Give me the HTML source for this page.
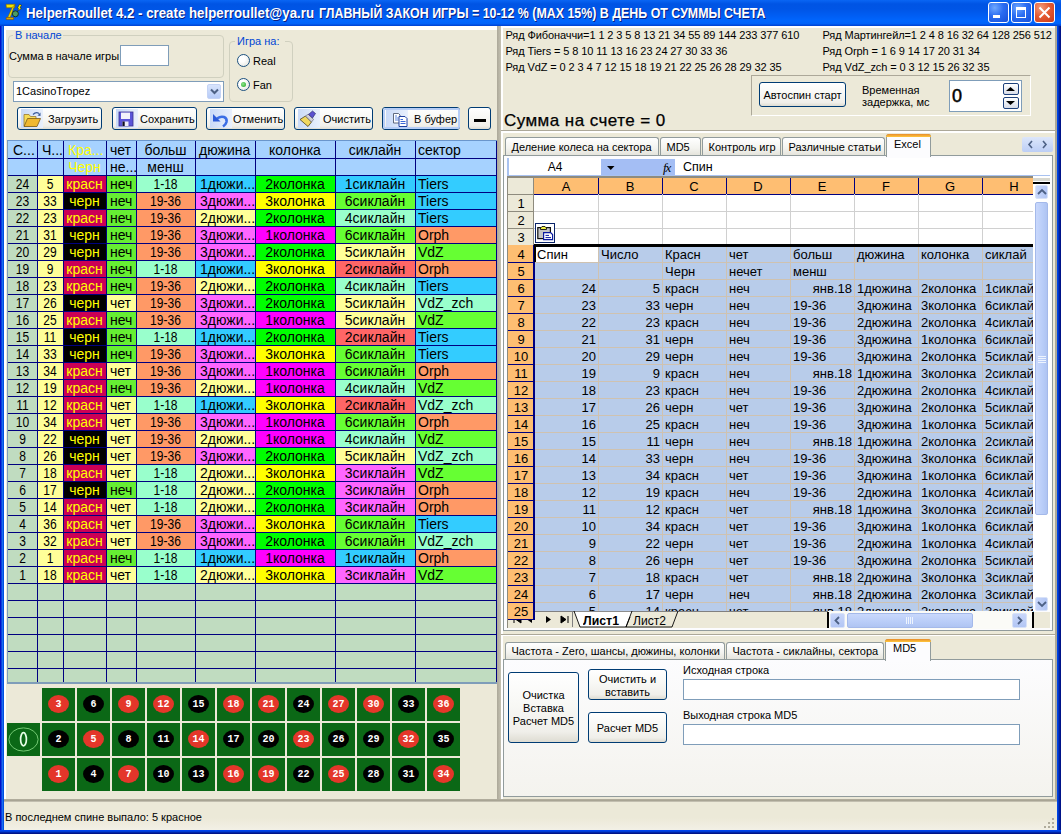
<!DOCTYPE html>
<html><head><meta charset="utf-8"><title>HelperRoullet</title>
<style>
html,body{margin:0;padding:0;}
body{width:1061px;height:834px;position:relative;overflow:hidden;font-family:"Liberation Sans",sans-serif;background:#0054E3;}
body>div{position:absolute;box-sizing:content-box;}
.t{white-space:pre;font-family:"Liberation Sans",sans-serif;}
</style></head><body>
<div style="left:0px;top:0px;width:1061px;height:834px;background:#0054E3;"></div>
<div style="left:1057px;top:0px;width:4px;height:834px;background:linear-gradient(to right,#0048F0 0px,#0040D8 1px,#0028B0 2px,#001890 3px,#000E80 4px);"></div>
<div style="left:0px;top:0px;width:4px;height:834px;background:linear-gradient(to right,#0010C8 0px,#0010C8 1px,#1A70F0 2px,#1A6CF0 2.5px,#0050E0 3.2px,#0050E0 4px);"></div>
<div style="left:0px;top:830px;width:1061px;height:4px;background:linear-gradient(#0040F0 0px,#0046E8 1px,#0030C0 2px,#001890 3px,#001080 4px);"></div>
<div style="left:0px;top:0px;width:1061px;height:26px;background:linear-gradient(#0A66F4 0px,#0054E4 4px,#0055E6 9px,#005EF4 16px,#0066FE 21px,#0062F8 23.5px,#0040D0 26px);"></div>
<svg style="position:absolute;left:0px;top:0px" width="26" height="24" viewBox="0 0 26 24">
<path d="M6 4.3 L15 4.3 L14.6 7.8 L6.4 7.8 Z" fill="#F2E400" stroke="#7A5A00" stroke-width="0.6"/>
<path d="M12.2 7.5 L15 4.5 L10.2 17.6 L7.6 17.6 Z" fill="#EAD800" stroke="#7A5A00" stroke-width="0.5"/>
<path d="M6.2 17.4 L13.6 17.4 L13.6 19.6 L6.2 19.6 Z" fill="#D8A800" stroke="#7A3A00" stroke-width="0.5"/>
<circle cx="15.4" cy="13.8" r="3" fill="#4A9A66" stroke="#0A200A" stroke-width="0.8"/>
<path d="M19.5 4.2 L21.6 5.2 L20 7.6 L21.4 8.4 L17.6 11.2 L18.6 8.6 L17.6 7.8 Z" fill="#F8F000" stroke="#101010" stroke-width="0.5"/>
</svg>
<div class="t" style="left:26px;top:6.15px;font-size:14px;line-height:14px;color:#fff;font-weight:700;transform:scaleX(0.9478);transform-origin:0 0;text-shadow:1px 1px 0 #0A1E80;">HelperRoullet 4.2 - create helperroullet@ya.ru</div>
<div class="t" style="left:318.5px;top:6.15px;font-size:14px;line-height:14px;color:#fff;font-weight:700;transform:scaleX(0.8860);transform-origin:0 0;text-shadow:1px 1px 0 #0A1E80;">ГЛАВНЫЙ ЗАКОН ИГРЫ = 10-12 % (MAX 15%) В ДЕНЬ ОТ СУММЫ СЧЕТА</div>
<div style="left:988px;top:2px;width:19px;height:19px;border:1px solid #fff;border-radius:3px;background:radial-gradient(circle at 30% 25%,#6FA8FF 0%,#2A6CF2 45%,#1750D8 100%);"></div>
<div style="left:1011px;top:2px;width:19px;height:19px;border:1px solid #fff;border-radius:3px;background:radial-gradient(circle at 30% 25%,#6FA8FF 0%,#2A6CF2 45%,#1750D8 100%);"></div>
<div style="left:1034px;top:2px;width:19px;height:19px;border:1px solid #fff;border-radius:3px;background:radial-gradient(circle at 30% 25%,#F29A7A 0%,#E55B33 45%,#C8391A 100%);"></div>
<div style="left:993px;top:15px;width:7px;height:3px;background:#fff;"></div>
<div style="left:1016px;top:7px;width:8px;height:7px;border:1.5px solid #fff;border-top-width:3px;"></div>
<svg style="position:absolute;left:1038px;top:6px" width="13" height="13" viewBox="0 0 13 13"><path d="M1.5 1.5 L11.5 11.5 M11.5 1.5 L1.5 11.5" stroke="#fff" stroke-width="2"/></svg>
<div style="left:4px;top:26px;width:1053px;height:804px;background:#ECE9D8;"></div>
<div style="left:4px;top:26px;width:493px;height:4px;background:#fff;"></div>
<div style="left:4px;top:26px;width:2px;height:774px;background:#fff;"></div>
<div style="left:497px;top:26px;width:4px;height:774px;background:linear-gradient(to right,#ACA899,#C5C2B2);"></div>
<div style="left:8px;top:35px;width:214px;height:41px;border:1px solid #D0D0BF;border-radius:4px;"></div>
<div style="left:13px;top:30px;width:50px;height:10px;background:#ECE9D8;"></div>
<div class="t" style="left:15px;top:30.19px;font-size:11px;line-height:11px;color:#0046D5;font-weight:400;">В начале</div>
<div class="t" style="left:9px;top:50.69px;font-size:11px;line-height:11px;color:#000;font-weight:400;">Сумма в начале игры</div>
<div style="left:120px;top:45px;width:47px;height:19px;border:1px solid #7F9DB9;background:#fff;"></div>
<div style="left:229px;top:41px;width:62px;height:59px;border:1px solid #D0D0BF;border-radius:4px;"></div>
<div style="left:235px;top:36px;width:50px;height:10px;background:#ECE9D8;"></div>
<div class="t" style="left:237px;top:36.19px;font-size:11px;line-height:11px;color:#0046D5;font-weight:400;">Игра на:</div>
<div style="left:237px;top:54px;width:11px;height:11px;border:1px solid #1C5180;border-radius:50%;background:radial-gradient(circle at 35% 35%,#fff 30%,#E0E0D8 100%);"></div>
<div class="t" style="left:253px;top:55.69px;font-size:11px;line-height:11px;color:#000;font-weight:400;">Real</div>
<div style="left:237px;top:78px;width:11px;height:11px;border:1px solid #1C5180;border-radius:50%;background:radial-gradient(circle at 35% 35%,#fff 30%,#E0E0D8 100%);"></div>
<div style="left:241px;top:82px;width:5px;height:5px;border-radius:50%;background:radial-gradient(circle at 40% 40%,#8CE68C,#21A121);"></div>
<div class="t" style="left:253px;top:79.69px;font-size:11px;line-height:11px;color:#000;font-weight:400;">Fan</div>
<div style="left:13px;top:81px;width:209px;height:19px;border:1px solid #7F9DB9;background:#fff;"></div>
<div class="t" style="left:16px;top:85.69px;font-size:11px;line-height:11px;color:#000;font-weight:400;">1CasinoTropez</div>
<div style="left:207px;top:84px;width:14px;height:15px;border-radius:2px;background:linear-gradient(#D8E4FC,#B6CBF8);border:1px solid #C4D3F5;box-sizing:border-box;"></div>
<svg style="position:absolute;left:210px;top:88px" width="9" height="7" viewBox="0 0 9 7"><path d="M1 1.5 L4.5 5 L8 1.5" fill="none" stroke="#4D6185" stroke-width="2"/></svg>
<div style="left:17px;top:107px;width:83px;height:21px;border:1px solid #003C74;border-radius:3px;background:linear-gradient(#FFFFFF 0%,#F8F8F5 45%,#F0EFEA 85%,#DEDCD2 100%);"></div>
<div style="left:21px;top:109px;width:22px;height:19px;background:linear-gradient(to right,#C9DAF8,#E9F0FC);"></div>
<svg style="position:absolute;left:21px;top:109px" width="22" height="19" viewBox="0 0 22 19"><path d="M3 17 L3 5.5 L8 5.5 L9.5 7.5 L15 7.5 L15 17 Z" fill="#F6DC58" stroke="#9A7A30" stroke-width="0.8"/><path d="M6.5 9.5 L19.5 9.5 L16 17.5 L3 17.5 Z" fill="#F0B830" stroke="#7A5A18" stroke-width="0.8"/><path d="M12 5.5 Q15 2.5 18 4.5" fill="none" stroke="#3A5A9A" stroke-width="1.3"/><path d="M16.5 6.5 L19.5 3.5 L19.5 7 Z" fill="#3A5A9A"/></svg>
<div class="t" style="left:48px;top:113.99px;font-size:11px;line-height:11px;color:#000;font-weight:400;">Загрузить</div>
<div style="left:112px;top:107px;width:83px;height:21px;border:1px solid #003C74;border-radius:3px;background:linear-gradient(#FFFFFF 0%,#F8F8F5 45%,#F0EFEA 85%,#DEDCD2 100%);"></div>
<div style="left:116px;top:109px;width:22px;height:19px;background:linear-gradient(to right,#C9DAF8,#E9F0FC);"></div>
<svg style="position:absolute;left:116px;top:109px" width="22" height="19" viewBox="0 0 22 19"><rect x="3" y="3" width="14" height="14" fill="#5B55D8" stroke="#3A3090" stroke-width="0.8"/><rect x="5" y="3.6" width="9" height="6.4" fill="#F4F4FA"/><rect x="6.5" y="12.5" width="6" height="4.5" fill="#EDEDF8"/><rect x="6.5" y="12.5" width="2.2" height="4.5" fill="#101020"/></svg>
<div class="t" style="left:140px;top:113.99px;font-size:11px;line-height:11px;color:#000;font-weight:400;">Сохранить</div>
<div style="left:206px;top:107px;width:77px;height:21px;border:1px solid #003C74;border-radius:3px;background:linear-gradient(#FFFFFF 0%,#F8F8F5 45%,#F0EFEA 85%,#DEDCD2 100%);"></div>
<div style="left:210px;top:109px;width:22px;height:19px;background:linear-gradient(to right,#C9DAF8,#E9F0FC);"></div>
<svg style="position:absolute;left:210px;top:109px" width="22" height="19" viewBox="0 0 22 19"><path d="M7 9.5 C12 6 17.5 8 16.5 13 C16 15 14.5 16.5 13 17.5" fill="none" stroke="#3B6EE5" stroke-width="2.6"/><path d="M3 5 L3 12.5 L10.5 12.5 Z" fill="#2C5BD8"/></svg>
<div class="t" style="left:233px;top:113.99px;font-size:11px;line-height:11px;color:#000;font-weight:400;">Отменить</div>
<div style="left:294px;top:107px;width:77px;height:21px;border:1px solid #003C74;border-radius:3px;background:linear-gradient(#FFFFFF 0%,#F8F8F5 45%,#F0EFEA 85%,#DEDCD2 100%);"></div>
<div style="left:298px;top:109px;width:22px;height:19px;background:linear-gradient(to right,#C9DAF8,#E9F0FC);"></div>
<svg style="position:absolute;left:298px;top:109px" width="22" height="19" viewBox="0 0 22 19"><path d="M2 10.5 L7.5 7 L13.5 13 L10 17.5 Z" fill="#F0D860" stroke="#4A4020" stroke-width="0.8"/><path d="M7.5 7 L10.5 5 L15.5 10.5 L13.5 13 Z" fill="#D0D0D8" stroke="#606070" stroke-width="0.6"/><path d="M10.5 5.5 L14.5 2 L17.5 4.5 L14.5 9 Z" fill="#5A50D0" stroke="#202060" stroke-width="0.6"/></svg>
<div class="t" style="left:323px;top:113.99px;font-size:11px;line-height:11px;color:#000;font-weight:400;">Очистить</div>
<div style="left:382px;top:107px;width:76px;height:21px;border:1px solid #003C74;border-radius:3px;background:linear-gradient(#FFFFFF 0%,#F8F8F5 45%,#F0EFEA 85%,#DEDCD2 100%);"></div>
<div style="left:386px;top:109px;width:22px;height:19px;background:linear-gradient(to right,#C9DAF8,#E9F0FC);"></div>
<svg style="position:absolute;left:386px;top:109px" width="22" height="19" viewBox="0 0 22 19"><path d="M7.5 4.5 H12.5 L14 6 V14 H7.5 Z" fill="#fff" stroke="#505a70" stroke-width="0.9"/><path d="M9 7 H11 M9 9 H12.5 M9 11 H12.5" stroke="#4A78D8" stroke-width="0.9"/><path d="M13 7.5 H19 L21 9.5 V17.5 H13 Z" fill="#fff" stroke="#2040A0" stroke-width="1"/><path d="M14.5 10.5 H17 M14.5 12.5 H19.5 M14.5 14.5 H19.5" stroke="#3A68D8" stroke-width="1"/></svg>
<div class="t" style="left:414px;top:113.99px;font-size:11px;line-height:11px;color:#000;font-weight:400;">В буфер</div>
<div style="left:383px;top:108px;width:73px;height:17px;border:2px solid #B6CDF6;border-radius:2px;"></div>
<div style="left:468px;top:107px;width:21px;height:21px;border:1px solid #003C74;border-radius:3px;background:linear-gradient(#FFFFFF 0%,#F8F8F5 45%,#F0EFEA 85%,#DEDCD2 100%);"></div>
<div style="left:474px;top:119px;width:12px;height:3px;background:#000;"></div>
<div style="left:7px;top:140px;width:490px;height:543px;background:#C0DCC0;"></div>
<div style="left:7px;top:140px;width:1px;height:543px;background:#7F9DB9;"></div>
<div style="left:7px;top:682px;width:490px;height:2px;background:#7F9DB9;"></div>
<div style="left:7px;top:140px;width:490px;height:1px;background:#6A96CC;"></div>
<div style="left:8px;top:141px;width:488px;height:34px;background:#A6D2FF;"></div>
<div style="left:8px;top:176px;width:29px;height:16px;background:#C0DCC0;"></div>
<div style="left:37px;top:176px;width:26px;height:16px;background:#FFFF99;"></div>
<div style="left:63px;top:176px;width:43px;height:16px;background:#CC0055;"></div>
<div style="left:106px;top:176px;width:30px;height:16px;background:#66EE33;"></div>
<div style="left:136px;top:176px;width:59px;height:16px;background:#99FFCC;"></div>
<div style="left:195px;top:176px;width:60px;height:16px;background:#33CCFF;"></div>
<div style="left:255px;top:176px;width:80px;height:16px;background:#00FF00;"></div>
<div style="left:335px;top:176px;width:80px;height:16px;background:#33CCFF;"></div>
<div style="left:415px;top:176px;width:81px;height:16px;background:#33CCFF;"></div>
<div class="t" style="left:8px;top:177.15px;font-size:14px;line-height:14px;color:#000;font-weight:400;width:29px;text-align:center;transform:scaleX(0.86);transform-origin:50% 0;">24</div>
<div class="t" style="left:37px;top:177.15px;font-size:14px;line-height:14px;color:#000;font-weight:400;width:26px;text-align:center;transform:scaleX(0.86);transform-origin:50% 0;">5</div>
<div class="t" style="left:63px;top:177.15px;font-size:14px;line-height:14px;color:#FFFF00;font-weight:400;width:43px;text-align:center;">красн</div>
<div class="t" style="left:110px;top:177.15px;font-size:14px;line-height:14px;color:#000;font-weight:400;">неч</div>
<div class="t" style="left:136px;top:177.15px;font-size:14px;line-height:14px;color:#000;font-weight:400;width:59px;text-align:center;transform:scaleX(0.86);transform-origin:50% 0;">1-18</div>
<div class="t" style="left:200px;top:177.15px;font-size:14px;line-height:14px;color:#000;font-weight:400;">1дюжи...</div>
<div class="t" style="left:255px;top:177.15px;font-size:14px;line-height:14px;color:#000;font-weight:400;width:80px;text-align:center;">2колонка</div>
<div class="t" style="left:335px;top:177.15px;font-size:14px;line-height:14px;color:#000;font-weight:400;width:80px;text-align:center;">1сиклайн</div>
<div class="t" style="left:418px;top:177.15px;font-size:14px;line-height:14px;color:#000;font-weight:400;">Tiers</div>
<div style="left:8px;top:193px;width:29px;height:16px;background:#C0DCC0;"></div>
<div style="left:37px;top:193px;width:26px;height:16px;background:#FFFF99;"></div>
<div style="left:63px;top:193px;width:43px;height:16px;background:#000000;"></div>
<div style="left:106px;top:193px;width:30px;height:16px;background:#66EE33;"></div>
<div style="left:136px;top:193px;width:59px;height:16px;background:#FF9966;"></div>
<div style="left:195px;top:193px;width:60px;height:16px;background:#FF66FF;"></div>
<div style="left:255px;top:193px;width:80px;height:16px;background:#FFFF00;"></div>
<div style="left:335px;top:193px;width:80px;height:16px;background:#66FF33;"></div>
<div style="left:415px;top:193px;width:81px;height:16px;background:#33CCFF;"></div>
<div class="t" style="left:8px;top:194.15px;font-size:14px;line-height:14px;color:#000;font-weight:400;width:29px;text-align:center;transform:scaleX(0.86);transform-origin:50% 0;">23</div>
<div class="t" style="left:37px;top:194.15px;font-size:14px;line-height:14px;color:#000;font-weight:400;width:26px;text-align:center;transform:scaleX(0.86);transform-origin:50% 0;">33</div>
<div class="t" style="left:63px;top:194.15px;font-size:14px;line-height:14px;color:#FFFF00;font-weight:400;width:43px;text-align:center;">черн</div>
<div class="t" style="left:110px;top:194.15px;font-size:14px;line-height:14px;color:#000;font-weight:400;">неч</div>
<div class="t" style="left:136px;top:194.15px;font-size:14px;line-height:14px;color:#000;font-weight:400;width:59px;text-align:center;transform:scaleX(0.86);transform-origin:50% 0;">19-36</div>
<div class="t" style="left:200px;top:194.15px;font-size:14px;line-height:14px;color:#000;font-weight:400;">3дюжи...</div>
<div class="t" style="left:255px;top:194.15px;font-size:14px;line-height:14px;color:#000;font-weight:400;width:80px;text-align:center;">3колонка</div>
<div class="t" style="left:335px;top:194.15px;font-size:14px;line-height:14px;color:#000;font-weight:400;width:80px;text-align:center;">6сиклайн</div>
<div class="t" style="left:418px;top:194.15px;font-size:14px;line-height:14px;color:#000;font-weight:400;">Tiers</div>
<div style="left:8px;top:210px;width:29px;height:16px;background:#C0DCC0;"></div>
<div style="left:37px;top:210px;width:26px;height:16px;background:#FFFF99;"></div>
<div style="left:63px;top:210px;width:43px;height:16px;background:#CC0055;"></div>
<div style="left:106px;top:210px;width:30px;height:16px;background:#66EE33;"></div>
<div style="left:136px;top:210px;width:59px;height:16px;background:#FF9966;"></div>
<div style="left:195px;top:210px;width:60px;height:16px;background:#FFFF99;"></div>
<div style="left:255px;top:210px;width:80px;height:16px;background:#00FF00;"></div>
<div style="left:335px;top:210px;width:80px;height:16px;background:#99FFCC;"></div>
<div style="left:415px;top:210px;width:81px;height:16px;background:#33CCFF;"></div>
<div class="t" style="left:8px;top:211.15px;font-size:14px;line-height:14px;color:#000;font-weight:400;width:29px;text-align:center;transform:scaleX(0.86);transform-origin:50% 0;">22</div>
<div class="t" style="left:37px;top:211.15px;font-size:14px;line-height:14px;color:#000;font-weight:400;width:26px;text-align:center;transform:scaleX(0.86);transform-origin:50% 0;">23</div>
<div class="t" style="left:63px;top:211.15px;font-size:14px;line-height:14px;color:#FFFF00;font-weight:400;width:43px;text-align:center;">красн</div>
<div class="t" style="left:110px;top:211.15px;font-size:14px;line-height:14px;color:#000;font-weight:400;">неч</div>
<div class="t" style="left:136px;top:211.15px;font-size:14px;line-height:14px;color:#000;font-weight:400;width:59px;text-align:center;transform:scaleX(0.86);transform-origin:50% 0;">19-36</div>
<div class="t" style="left:200px;top:211.15px;font-size:14px;line-height:14px;color:#000;font-weight:400;">2дюжи...</div>
<div class="t" style="left:255px;top:211.15px;font-size:14px;line-height:14px;color:#000;font-weight:400;width:80px;text-align:center;">2колонка</div>
<div class="t" style="left:335px;top:211.15px;font-size:14px;line-height:14px;color:#000;font-weight:400;width:80px;text-align:center;">4сиклайн</div>
<div class="t" style="left:418px;top:211.15px;font-size:14px;line-height:14px;color:#000;font-weight:400;">Tiers</div>
<div style="left:8px;top:227px;width:29px;height:16px;background:#C0DCC0;"></div>
<div style="left:37px;top:227px;width:26px;height:16px;background:#FFFF99;"></div>
<div style="left:63px;top:227px;width:43px;height:16px;background:#000000;"></div>
<div style="left:106px;top:227px;width:30px;height:16px;background:#66EE33;"></div>
<div style="left:136px;top:227px;width:59px;height:16px;background:#FF9966;"></div>
<div style="left:195px;top:227px;width:60px;height:16px;background:#FF66FF;"></div>
<div style="left:255px;top:227px;width:80px;height:16px;background:#FF00FF;"></div>
<div style="left:335px;top:227px;width:80px;height:16px;background:#66FF33;"></div>
<div style="left:415px;top:227px;width:81px;height:16px;background:#FF9966;"></div>
<div class="t" style="left:8px;top:228.15px;font-size:14px;line-height:14px;color:#000;font-weight:400;width:29px;text-align:center;transform:scaleX(0.86);transform-origin:50% 0;">21</div>
<div class="t" style="left:37px;top:228.15px;font-size:14px;line-height:14px;color:#000;font-weight:400;width:26px;text-align:center;transform:scaleX(0.86);transform-origin:50% 0;">31</div>
<div class="t" style="left:63px;top:228.15px;font-size:14px;line-height:14px;color:#FFFF00;font-weight:400;width:43px;text-align:center;">черн</div>
<div class="t" style="left:110px;top:228.15px;font-size:14px;line-height:14px;color:#000;font-weight:400;">неч</div>
<div class="t" style="left:136px;top:228.15px;font-size:14px;line-height:14px;color:#000;font-weight:400;width:59px;text-align:center;transform:scaleX(0.86);transform-origin:50% 0;">19-36</div>
<div class="t" style="left:200px;top:228.15px;font-size:14px;line-height:14px;color:#000;font-weight:400;">3дюжи...</div>
<div class="t" style="left:255px;top:228.15px;font-size:14px;line-height:14px;color:#000;font-weight:400;width:80px;text-align:center;">1колонка</div>
<div class="t" style="left:335px;top:228.15px;font-size:14px;line-height:14px;color:#000;font-weight:400;width:80px;text-align:center;">6сиклайн</div>
<div class="t" style="left:418px;top:228.15px;font-size:14px;line-height:14px;color:#000;font-weight:400;">Orph</div>
<div style="left:8px;top:244px;width:29px;height:16px;background:#C0DCC0;"></div>
<div style="left:37px;top:244px;width:26px;height:16px;background:#FFFF99;"></div>
<div style="left:63px;top:244px;width:43px;height:16px;background:#000000;"></div>
<div style="left:106px;top:244px;width:30px;height:16px;background:#66EE33;"></div>
<div style="left:136px;top:244px;width:59px;height:16px;background:#FF9966;"></div>
<div style="left:195px;top:244px;width:60px;height:16px;background:#FF66FF;"></div>
<div style="left:255px;top:244px;width:80px;height:16px;background:#00FF00;"></div>
<div style="left:335px;top:244px;width:80px;height:16px;background:#FFFF99;"></div>
<div style="left:415px;top:244px;width:81px;height:16px;background:#66FF33;"></div>
<div class="t" style="left:8px;top:245.15px;font-size:14px;line-height:14px;color:#000;font-weight:400;width:29px;text-align:center;transform:scaleX(0.86);transform-origin:50% 0;">20</div>
<div class="t" style="left:37px;top:245.15px;font-size:14px;line-height:14px;color:#000;font-weight:400;width:26px;text-align:center;transform:scaleX(0.86);transform-origin:50% 0;">29</div>
<div class="t" style="left:63px;top:245.15px;font-size:14px;line-height:14px;color:#FFFF00;font-weight:400;width:43px;text-align:center;">черн</div>
<div class="t" style="left:110px;top:245.15px;font-size:14px;line-height:14px;color:#000;font-weight:400;">неч</div>
<div class="t" style="left:136px;top:245.15px;font-size:14px;line-height:14px;color:#000;font-weight:400;width:59px;text-align:center;transform:scaleX(0.86);transform-origin:50% 0;">19-36</div>
<div class="t" style="left:200px;top:245.15px;font-size:14px;line-height:14px;color:#000;font-weight:400;">3дюжи...</div>
<div class="t" style="left:255px;top:245.15px;font-size:14px;line-height:14px;color:#000;font-weight:400;width:80px;text-align:center;">2колонка</div>
<div class="t" style="left:335px;top:245.15px;font-size:14px;line-height:14px;color:#000;font-weight:400;width:80px;text-align:center;">5сиклайн</div>
<div class="t" style="left:418px;top:245.15px;font-size:14px;line-height:14px;color:#000;font-weight:400;">VdZ</div>
<div style="left:8px;top:261px;width:29px;height:16px;background:#C0DCC0;"></div>
<div style="left:37px;top:261px;width:26px;height:16px;background:#FFFF99;"></div>
<div style="left:63px;top:261px;width:43px;height:16px;background:#CC0055;"></div>
<div style="left:106px;top:261px;width:30px;height:16px;background:#66EE33;"></div>
<div style="left:136px;top:261px;width:59px;height:16px;background:#99FFCC;"></div>
<div style="left:195px;top:261px;width:60px;height:16px;background:#33CCFF;"></div>
<div style="left:255px;top:261px;width:80px;height:16px;background:#FFFF00;"></div>
<div style="left:335px;top:261px;width:80px;height:16px;background:#FF6666;"></div>
<div style="left:415px;top:261px;width:81px;height:16px;background:#FF9966;"></div>
<div class="t" style="left:8px;top:262.15px;font-size:14px;line-height:14px;color:#000;font-weight:400;width:29px;text-align:center;transform:scaleX(0.86);transform-origin:50% 0;">19</div>
<div class="t" style="left:37px;top:262.15px;font-size:14px;line-height:14px;color:#000;font-weight:400;width:26px;text-align:center;transform:scaleX(0.86);transform-origin:50% 0;">9</div>
<div class="t" style="left:63px;top:262.15px;font-size:14px;line-height:14px;color:#FFFF00;font-weight:400;width:43px;text-align:center;">красн</div>
<div class="t" style="left:110px;top:262.15px;font-size:14px;line-height:14px;color:#000;font-weight:400;">неч</div>
<div class="t" style="left:136px;top:262.15px;font-size:14px;line-height:14px;color:#000;font-weight:400;width:59px;text-align:center;transform:scaleX(0.86);transform-origin:50% 0;">1-18</div>
<div class="t" style="left:200px;top:262.15px;font-size:14px;line-height:14px;color:#000;font-weight:400;">1дюжи...</div>
<div class="t" style="left:255px;top:262.15px;font-size:14px;line-height:14px;color:#000;font-weight:400;width:80px;text-align:center;">3колонка</div>
<div class="t" style="left:335px;top:262.15px;font-size:14px;line-height:14px;color:#000;font-weight:400;width:80px;text-align:center;">2сиклайн</div>
<div class="t" style="left:418px;top:262.15px;font-size:14px;line-height:14px;color:#000;font-weight:400;">Orph</div>
<div style="left:8px;top:278px;width:29px;height:16px;background:#C0DCC0;"></div>
<div style="left:37px;top:278px;width:26px;height:16px;background:#FFFF99;"></div>
<div style="left:63px;top:278px;width:43px;height:16px;background:#CC0055;"></div>
<div style="left:106px;top:278px;width:30px;height:16px;background:#66EE33;"></div>
<div style="left:136px;top:278px;width:59px;height:16px;background:#FF9966;"></div>
<div style="left:195px;top:278px;width:60px;height:16px;background:#FFFF99;"></div>
<div style="left:255px;top:278px;width:80px;height:16px;background:#00FF00;"></div>
<div style="left:335px;top:278px;width:80px;height:16px;background:#99FFCC;"></div>
<div style="left:415px;top:278px;width:81px;height:16px;background:#33CCFF;"></div>
<div class="t" style="left:8px;top:279.15px;font-size:14px;line-height:14px;color:#000;font-weight:400;width:29px;text-align:center;transform:scaleX(0.86);transform-origin:50% 0;">18</div>
<div class="t" style="left:37px;top:279.15px;font-size:14px;line-height:14px;color:#000;font-weight:400;width:26px;text-align:center;transform:scaleX(0.86);transform-origin:50% 0;">23</div>
<div class="t" style="left:63px;top:279.15px;font-size:14px;line-height:14px;color:#FFFF00;font-weight:400;width:43px;text-align:center;">красн</div>
<div class="t" style="left:110px;top:279.15px;font-size:14px;line-height:14px;color:#000;font-weight:400;">неч</div>
<div class="t" style="left:136px;top:279.15px;font-size:14px;line-height:14px;color:#000;font-weight:400;width:59px;text-align:center;transform:scaleX(0.86);transform-origin:50% 0;">19-36</div>
<div class="t" style="left:200px;top:279.15px;font-size:14px;line-height:14px;color:#000;font-weight:400;">2дюжи...</div>
<div class="t" style="left:255px;top:279.15px;font-size:14px;line-height:14px;color:#000;font-weight:400;width:80px;text-align:center;">2колонка</div>
<div class="t" style="left:335px;top:279.15px;font-size:14px;line-height:14px;color:#000;font-weight:400;width:80px;text-align:center;">4сиклайн</div>
<div class="t" style="left:418px;top:279.15px;font-size:14px;line-height:14px;color:#000;font-weight:400;">Tiers</div>
<div style="left:8px;top:295px;width:29px;height:16px;background:#C0DCC0;"></div>
<div style="left:37px;top:295px;width:26px;height:16px;background:#FFFF99;"></div>
<div style="left:63px;top:295px;width:43px;height:16px;background:#000000;"></div>
<div style="left:106px;top:295px;width:30px;height:16px;background:#FFFF99;"></div>
<div style="left:136px;top:295px;width:59px;height:16px;background:#FF9966;"></div>
<div style="left:195px;top:295px;width:60px;height:16px;background:#FF66FF;"></div>
<div style="left:255px;top:295px;width:80px;height:16px;background:#00FF00;"></div>
<div style="left:335px;top:295px;width:80px;height:16px;background:#FFFF99;"></div>
<div style="left:415px;top:295px;width:81px;height:16px;background:#99FFCC;"></div>
<div class="t" style="left:8px;top:296.15px;font-size:14px;line-height:14px;color:#000;font-weight:400;width:29px;text-align:center;transform:scaleX(0.86);transform-origin:50% 0;">17</div>
<div class="t" style="left:37px;top:296.15px;font-size:14px;line-height:14px;color:#000;font-weight:400;width:26px;text-align:center;transform:scaleX(0.86);transform-origin:50% 0;">26</div>
<div class="t" style="left:63px;top:296.15px;font-size:14px;line-height:14px;color:#FFFF00;font-weight:400;width:43px;text-align:center;">черн</div>
<div class="t" style="left:110px;top:296.15px;font-size:14px;line-height:14px;color:#000;font-weight:400;">чет</div>
<div class="t" style="left:136px;top:296.15px;font-size:14px;line-height:14px;color:#000;font-weight:400;width:59px;text-align:center;transform:scaleX(0.86);transform-origin:50% 0;">19-36</div>
<div class="t" style="left:200px;top:296.15px;font-size:14px;line-height:14px;color:#000;font-weight:400;">3дюжи...</div>
<div class="t" style="left:255px;top:296.15px;font-size:14px;line-height:14px;color:#000;font-weight:400;width:80px;text-align:center;">2колонка</div>
<div class="t" style="left:335px;top:296.15px;font-size:14px;line-height:14px;color:#000;font-weight:400;width:80px;text-align:center;">5сиклайн</div>
<div class="t" style="left:418px;top:296.15px;font-size:14px;line-height:14px;color:#000;font-weight:400;">VdZ_zch</div>
<div style="left:8px;top:312px;width:29px;height:16px;background:#C0DCC0;"></div>
<div style="left:37px;top:312px;width:26px;height:16px;background:#FFFF99;"></div>
<div style="left:63px;top:312px;width:43px;height:16px;background:#CC0055;"></div>
<div style="left:106px;top:312px;width:30px;height:16px;background:#66EE33;"></div>
<div style="left:136px;top:312px;width:59px;height:16px;background:#FF9966;"></div>
<div style="left:195px;top:312px;width:60px;height:16px;background:#FF66FF;"></div>
<div style="left:255px;top:312px;width:80px;height:16px;background:#FF00FF;"></div>
<div style="left:335px;top:312px;width:80px;height:16px;background:#FFFF99;"></div>
<div style="left:415px;top:312px;width:81px;height:16px;background:#66FF33;"></div>
<div class="t" style="left:8px;top:313.15px;font-size:14px;line-height:14px;color:#000;font-weight:400;width:29px;text-align:center;transform:scaleX(0.86);transform-origin:50% 0;">16</div>
<div class="t" style="left:37px;top:313.15px;font-size:14px;line-height:14px;color:#000;font-weight:400;width:26px;text-align:center;transform:scaleX(0.86);transform-origin:50% 0;">25</div>
<div class="t" style="left:63px;top:313.15px;font-size:14px;line-height:14px;color:#FFFF00;font-weight:400;width:43px;text-align:center;">красн</div>
<div class="t" style="left:110px;top:313.15px;font-size:14px;line-height:14px;color:#000;font-weight:400;">неч</div>
<div class="t" style="left:136px;top:313.15px;font-size:14px;line-height:14px;color:#000;font-weight:400;width:59px;text-align:center;transform:scaleX(0.86);transform-origin:50% 0;">19-36</div>
<div class="t" style="left:200px;top:313.15px;font-size:14px;line-height:14px;color:#000;font-weight:400;">3дюжи...</div>
<div class="t" style="left:255px;top:313.15px;font-size:14px;line-height:14px;color:#000;font-weight:400;width:80px;text-align:center;">1колонка</div>
<div class="t" style="left:335px;top:313.15px;font-size:14px;line-height:14px;color:#000;font-weight:400;width:80px;text-align:center;">5сиклайн</div>
<div class="t" style="left:418px;top:313.15px;font-size:14px;line-height:14px;color:#000;font-weight:400;">VdZ</div>
<div style="left:8px;top:329px;width:29px;height:16px;background:#C0DCC0;"></div>
<div style="left:37px;top:329px;width:26px;height:16px;background:#FFFF99;"></div>
<div style="left:63px;top:329px;width:43px;height:16px;background:#000000;"></div>
<div style="left:106px;top:329px;width:30px;height:16px;background:#66EE33;"></div>
<div style="left:136px;top:329px;width:59px;height:16px;background:#99FFCC;"></div>
<div style="left:195px;top:329px;width:60px;height:16px;background:#33CCFF;"></div>
<div style="left:255px;top:329px;width:80px;height:16px;background:#00FF00;"></div>
<div style="left:335px;top:329px;width:80px;height:16px;background:#FF6666;"></div>
<div style="left:415px;top:329px;width:81px;height:16px;background:#33CCFF;"></div>
<div class="t" style="left:8px;top:330.15px;font-size:14px;line-height:14px;color:#000;font-weight:400;width:29px;text-align:center;transform:scaleX(0.86);transform-origin:50% 0;">15</div>
<div class="t" style="left:37px;top:330.15px;font-size:14px;line-height:14px;color:#000;font-weight:400;width:26px;text-align:center;transform:scaleX(0.86);transform-origin:50% 0;">11</div>
<div class="t" style="left:63px;top:330.15px;font-size:14px;line-height:14px;color:#FFFF00;font-weight:400;width:43px;text-align:center;">черн</div>
<div class="t" style="left:110px;top:330.15px;font-size:14px;line-height:14px;color:#000;font-weight:400;">неч</div>
<div class="t" style="left:136px;top:330.15px;font-size:14px;line-height:14px;color:#000;font-weight:400;width:59px;text-align:center;transform:scaleX(0.86);transform-origin:50% 0;">1-18</div>
<div class="t" style="left:200px;top:330.15px;font-size:14px;line-height:14px;color:#000;font-weight:400;">1дюжи...</div>
<div class="t" style="left:255px;top:330.15px;font-size:14px;line-height:14px;color:#000;font-weight:400;width:80px;text-align:center;">2колонка</div>
<div class="t" style="left:335px;top:330.15px;font-size:14px;line-height:14px;color:#000;font-weight:400;width:80px;text-align:center;">2сиклайн</div>
<div class="t" style="left:418px;top:330.15px;font-size:14px;line-height:14px;color:#000;font-weight:400;">Tiers</div>
<div style="left:8px;top:346px;width:29px;height:16px;background:#C0DCC0;"></div>
<div style="left:37px;top:346px;width:26px;height:16px;background:#FFFF99;"></div>
<div style="left:63px;top:346px;width:43px;height:16px;background:#000000;"></div>
<div style="left:106px;top:346px;width:30px;height:16px;background:#66EE33;"></div>
<div style="left:136px;top:346px;width:59px;height:16px;background:#FF9966;"></div>
<div style="left:195px;top:346px;width:60px;height:16px;background:#FF66FF;"></div>
<div style="left:255px;top:346px;width:80px;height:16px;background:#FFFF00;"></div>
<div style="left:335px;top:346px;width:80px;height:16px;background:#66FF33;"></div>
<div style="left:415px;top:346px;width:81px;height:16px;background:#33CCFF;"></div>
<div class="t" style="left:8px;top:347.15px;font-size:14px;line-height:14px;color:#000;font-weight:400;width:29px;text-align:center;transform:scaleX(0.86);transform-origin:50% 0;">14</div>
<div class="t" style="left:37px;top:347.15px;font-size:14px;line-height:14px;color:#000;font-weight:400;width:26px;text-align:center;transform:scaleX(0.86);transform-origin:50% 0;">33</div>
<div class="t" style="left:63px;top:347.15px;font-size:14px;line-height:14px;color:#FFFF00;font-weight:400;width:43px;text-align:center;">черн</div>
<div class="t" style="left:110px;top:347.15px;font-size:14px;line-height:14px;color:#000;font-weight:400;">неч</div>
<div class="t" style="left:136px;top:347.15px;font-size:14px;line-height:14px;color:#000;font-weight:400;width:59px;text-align:center;transform:scaleX(0.86);transform-origin:50% 0;">19-36</div>
<div class="t" style="left:200px;top:347.15px;font-size:14px;line-height:14px;color:#000;font-weight:400;">3дюжи...</div>
<div class="t" style="left:255px;top:347.15px;font-size:14px;line-height:14px;color:#000;font-weight:400;width:80px;text-align:center;">3колонка</div>
<div class="t" style="left:335px;top:347.15px;font-size:14px;line-height:14px;color:#000;font-weight:400;width:80px;text-align:center;">6сиклайн</div>
<div class="t" style="left:418px;top:347.15px;font-size:14px;line-height:14px;color:#000;font-weight:400;">Tiers</div>
<div style="left:8px;top:363px;width:29px;height:16px;background:#C0DCC0;"></div>
<div style="left:37px;top:363px;width:26px;height:16px;background:#FFFF99;"></div>
<div style="left:63px;top:363px;width:43px;height:16px;background:#CC0055;"></div>
<div style="left:106px;top:363px;width:30px;height:16px;background:#FFFF99;"></div>
<div style="left:136px;top:363px;width:59px;height:16px;background:#FF9966;"></div>
<div style="left:195px;top:363px;width:60px;height:16px;background:#FF66FF;"></div>
<div style="left:255px;top:363px;width:80px;height:16px;background:#FF00FF;"></div>
<div style="left:335px;top:363px;width:80px;height:16px;background:#66FF33;"></div>
<div style="left:415px;top:363px;width:81px;height:16px;background:#FF9966;"></div>
<div class="t" style="left:8px;top:364.15px;font-size:14px;line-height:14px;color:#000;font-weight:400;width:29px;text-align:center;transform:scaleX(0.86);transform-origin:50% 0;">13</div>
<div class="t" style="left:37px;top:364.15px;font-size:14px;line-height:14px;color:#000;font-weight:400;width:26px;text-align:center;transform:scaleX(0.86);transform-origin:50% 0;">34</div>
<div class="t" style="left:63px;top:364.15px;font-size:14px;line-height:14px;color:#FFFF00;font-weight:400;width:43px;text-align:center;">красн</div>
<div class="t" style="left:110px;top:364.15px;font-size:14px;line-height:14px;color:#000;font-weight:400;">чет</div>
<div class="t" style="left:136px;top:364.15px;font-size:14px;line-height:14px;color:#000;font-weight:400;width:59px;text-align:center;transform:scaleX(0.86);transform-origin:50% 0;">19-36</div>
<div class="t" style="left:200px;top:364.15px;font-size:14px;line-height:14px;color:#000;font-weight:400;">3дюжи...</div>
<div class="t" style="left:255px;top:364.15px;font-size:14px;line-height:14px;color:#000;font-weight:400;width:80px;text-align:center;">1колонка</div>
<div class="t" style="left:335px;top:364.15px;font-size:14px;line-height:14px;color:#000;font-weight:400;width:80px;text-align:center;">6сиклайн</div>
<div class="t" style="left:418px;top:364.15px;font-size:14px;line-height:14px;color:#000;font-weight:400;">Orph</div>
<div style="left:8px;top:380px;width:29px;height:16px;background:#C0DCC0;"></div>
<div style="left:37px;top:380px;width:26px;height:16px;background:#FFFF99;"></div>
<div style="left:63px;top:380px;width:43px;height:16px;background:#CC0055;"></div>
<div style="left:106px;top:380px;width:30px;height:16px;background:#66EE33;"></div>
<div style="left:136px;top:380px;width:59px;height:16px;background:#FF9966;"></div>
<div style="left:195px;top:380px;width:60px;height:16px;background:#FFFF99;"></div>
<div style="left:255px;top:380px;width:80px;height:16px;background:#FF00FF;"></div>
<div style="left:335px;top:380px;width:80px;height:16px;background:#99FFCC;"></div>
<div style="left:415px;top:380px;width:81px;height:16px;background:#66FF33;"></div>
<div class="t" style="left:8px;top:381.15px;font-size:14px;line-height:14px;color:#000;font-weight:400;width:29px;text-align:center;transform:scaleX(0.86);transform-origin:50% 0;">12</div>
<div class="t" style="left:37px;top:381.15px;font-size:14px;line-height:14px;color:#000;font-weight:400;width:26px;text-align:center;transform:scaleX(0.86);transform-origin:50% 0;">19</div>
<div class="t" style="left:63px;top:381.15px;font-size:14px;line-height:14px;color:#FFFF00;font-weight:400;width:43px;text-align:center;">красн</div>
<div class="t" style="left:110px;top:381.15px;font-size:14px;line-height:14px;color:#000;font-weight:400;">неч</div>
<div class="t" style="left:136px;top:381.15px;font-size:14px;line-height:14px;color:#000;font-weight:400;width:59px;text-align:center;transform:scaleX(0.86);transform-origin:50% 0;">19-36</div>
<div class="t" style="left:200px;top:381.15px;font-size:14px;line-height:14px;color:#000;font-weight:400;">2дюжи...</div>
<div class="t" style="left:255px;top:381.15px;font-size:14px;line-height:14px;color:#000;font-weight:400;width:80px;text-align:center;">1колонка</div>
<div class="t" style="left:335px;top:381.15px;font-size:14px;line-height:14px;color:#000;font-weight:400;width:80px;text-align:center;">4сиклайн</div>
<div class="t" style="left:418px;top:381.15px;font-size:14px;line-height:14px;color:#000;font-weight:400;">VdZ</div>
<div style="left:8px;top:397px;width:29px;height:16px;background:#C0DCC0;"></div>
<div style="left:37px;top:397px;width:26px;height:16px;background:#FFFF99;"></div>
<div style="left:63px;top:397px;width:43px;height:16px;background:#CC0055;"></div>
<div style="left:106px;top:397px;width:30px;height:16px;background:#FFFF99;"></div>
<div style="left:136px;top:397px;width:59px;height:16px;background:#99FFCC;"></div>
<div style="left:195px;top:397px;width:60px;height:16px;background:#33CCFF;"></div>
<div style="left:255px;top:397px;width:80px;height:16px;background:#FFFF00;"></div>
<div style="left:335px;top:397px;width:80px;height:16px;background:#FF6666;"></div>
<div style="left:415px;top:397px;width:81px;height:16px;background:#99FFCC;"></div>
<div class="t" style="left:8px;top:398.15px;font-size:14px;line-height:14px;color:#000;font-weight:400;width:29px;text-align:center;transform:scaleX(0.86);transform-origin:50% 0;">11</div>
<div class="t" style="left:37px;top:398.15px;font-size:14px;line-height:14px;color:#000;font-weight:400;width:26px;text-align:center;transform:scaleX(0.86);transform-origin:50% 0;">12</div>
<div class="t" style="left:63px;top:398.15px;font-size:14px;line-height:14px;color:#FFFF00;font-weight:400;width:43px;text-align:center;">красн</div>
<div class="t" style="left:110px;top:398.15px;font-size:14px;line-height:14px;color:#000;font-weight:400;">чет</div>
<div class="t" style="left:136px;top:398.15px;font-size:14px;line-height:14px;color:#000;font-weight:400;width:59px;text-align:center;transform:scaleX(0.86);transform-origin:50% 0;">1-18</div>
<div class="t" style="left:200px;top:398.15px;font-size:14px;line-height:14px;color:#000;font-weight:400;">1дюжи...</div>
<div class="t" style="left:255px;top:398.15px;font-size:14px;line-height:14px;color:#000;font-weight:400;width:80px;text-align:center;">3колонка</div>
<div class="t" style="left:335px;top:398.15px;font-size:14px;line-height:14px;color:#000;font-weight:400;width:80px;text-align:center;">2сиклайн</div>
<div class="t" style="left:418px;top:398.15px;font-size:14px;line-height:14px;color:#000;font-weight:400;">VdZ_zch</div>
<div style="left:8px;top:414px;width:29px;height:16px;background:#C0DCC0;"></div>
<div style="left:37px;top:414px;width:26px;height:16px;background:#FFFF99;"></div>
<div style="left:63px;top:414px;width:43px;height:16px;background:#CC0055;"></div>
<div style="left:106px;top:414px;width:30px;height:16px;background:#FFFF99;"></div>
<div style="left:136px;top:414px;width:59px;height:16px;background:#FF9966;"></div>
<div style="left:195px;top:414px;width:60px;height:16px;background:#FF66FF;"></div>
<div style="left:255px;top:414px;width:80px;height:16px;background:#FF00FF;"></div>
<div style="left:335px;top:414px;width:80px;height:16px;background:#66FF33;"></div>
<div style="left:415px;top:414px;width:81px;height:16px;background:#FF9966;"></div>
<div class="t" style="left:8px;top:415.15px;font-size:14px;line-height:14px;color:#000;font-weight:400;width:29px;text-align:center;transform:scaleX(0.86);transform-origin:50% 0;">10</div>
<div class="t" style="left:37px;top:415.15px;font-size:14px;line-height:14px;color:#000;font-weight:400;width:26px;text-align:center;transform:scaleX(0.86);transform-origin:50% 0;">34</div>
<div class="t" style="left:63px;top:415.15px;font-size:14px;line-height:14px;color:#FFFF00;font-weight:400;width:43px;text-align:center;">красн</div>
<div class="t" style="left:110px;top:415.15px;font-size:14px;line-height:14px;color:#000;font-weight:400;">чет</div>
<div class="t" style="left:136px;top:415.15px;font-size:14px;line-height:14px;color:#000;font-weight:400;width:59px;text-align:center;transform:scaleX(0.86);transform-origin:50% 0;">19-36</div>
<div class="t" style="left:200px;top:415.15px;font-size:14px;line-height:14px;color:#000;font-weight:400;">3дюжи...</div>
<div class="t" style="left:255px;top:415.15px;font-size:14px;line-height:14px;color:#000;font-weight:400;width:80px;text-align:center;">1колонка</div>
<div class="t" style="left:335px;top:415.15px;font-size:14px;line-height:14px;color:#000;font-weight:400;width:80px;text-align:center;">6сиклайн</div>
<div class="t" style="left:418px;top:415.15px;font-size:14px;line-height:14px;color:#000;font-weight:400;">Orph</div>
<div style="left:8px;top:431px;width:29px;height:16px;background:#C0DCC0;"></div>
<div style="left:37px;top:431px;width:26px;height:16px;background:#FFFF99;"></div>
<div style="left:63px;top:431px;width:43px;height:16px;background:#000000;"></div>
<div style="left:106px;top:431px;width:30px;height:16px;background:#FFFF99;"></div>
<div style="left:136px;top:431px;width:59px;height:16px;background:#FF9966;"></div>
<div style="left:195px;top:431px;width:60px;height:16px;background:#FFFF99;"></div>
<div style="left:255px;top:431px;width:80px;height:16px;background:#FF00FF;"></div>
<div style="left:335px;top:431px;width:80px;height:16px;background:#99FFCC;"></div>
<div style="left:415px;top:431px;width:81px;height:16px;background:#66FF33;"></div>
<div class="t" style="left:8px;top:432.15px;font-size:14px;line-height:14px;color:#000;font-weight:400;width:29px;text-align:center;transform:scaleX(0.86);transform-origin:50% 0;">9</div>
<div class="t" style="left:37px;top:432.15px;font-size:14px;line-height:14px;color:#000;font-weight:400;width:26px;text-align:center;transform:scaleX(0.86);transform-origin:50% 0;">22</div>
<div class="t" style="left:63px;top:432.15px;font-size:14px;line-height:14px;color:#FFFF00;font-weight:400;width:43px;text-align:center;">черн</div>
<div class="t" style="left:110px;top:432.15px;font-size:14px;line-height:14px;color:#000;font-weight:400;">чет</div>
<div class="t" style="left:136px;top:432.15px;font-size:14px;line-height:14px;color:#000;font-weight:400;width:59px;text-align:center;transform:scaleX(0.86);transform-origin:50% 0;">19-36</div>
<div class="t" style="left:200px;top:432.15px;font-size:14px;line-height:14px;color:#000;font-weight:400;">2дюжи...</div>
<div class="t" style="left:255px;top:432.15px;font-size:14px;line-height:14px;color:#000;font-weight:400;width:80px;text-align:center;">1колонка</div>
<div class="t" style="left:335px;top:432.15px;font-size:14px;line-height:14px;color:#000;font-weight:400;width:80px;text-align:center;">4сиклайн</div>
<div class="t" style="left:418px;top:432.15px;font-size:14px;line-height:14px;color:#000;font-weight:400;">VdZ</div>
<div style="left:8px;top:448px;width:29px;height:16px;background:#C0DCC0;"></div>
<div style="left:37px;top:448px;width:26px;height:16px;background:#FFFF99;"></div>
<div style="left:63px;top:448px;width:43px;height:16px;background:#000000;"></div>
<div style="left:106px;top:448px;width:30px;height:16px;background:#FFFF99;"></div>
<div style="left:136px;top:448px;width:59px;height:16px;background:#FF9966;"></div>
<div style="left:195px;top:448px;width:60px;height:16px;background:#FF66FF;"></div>
<div style="left:255px;top:448px;width:80px;height:16px;background:#00FF00;"></div>
<div style="left:335px;top:448px;width:80px;height:16px;background:#FFFF99;"></div>
<div style="left:415px;top:448px;width:81px;height:16px;background:#99FFCC;"></div>
<div class="t" style="left:8px;top:449.15px;font-size:14px;line-height:14px;color:#000;font-weight:400;width:29px;text-align:center;transform:scaleX(0.86);transform-origin:50% 0;">8</div>
<div class="t" style="left:37px;top:449.15px;font-size:14px;line-height:14px;color:#000;font-weight:400;width:26px;text-align:center;transform:scaleX(0.86);transform-origin:50% 0;">26</div>
<div class="t" style="left:63px;top:449.15px;font-size:14px;line-height:14px;color:#FFFF00;font-weight:400;width:43px;text-align:center;">черн</div>
<div class="t" style="left:110px;top:449.15px;font-size:14px;line-height:14px;color:#000;font-weight:400;">чет</div>
<div class="t" style="left:136px;top:449.15px;font-size:14px;line-height:14px;color:#000;font-weight:400;width:59px;text-align:center;transform:scaleX(0.86);transform-origin:50% 0;">19-36</div>
<div class="t" style="left:200px;top:449.15px;font-size:14px;line-height:14px;color:#000;font-weight:400;">3дюжи...</div>
<div class="t" style="left:255px;top:449.15px;font-size:14px;line-height:14px;color:#000;font-weight:400;width:80px;text-align:center;">2колонка</div>
<div class="t" style="left:335px;top:449.15px;font-size:14px;line-height:14px;color:#000;font-weight:400;width:80px;text-align:center;">5сиклайн</div>
<div class="t" style="left:418px;top:449.15px;font-size:14px;line-height:14px;color:#000;font-weight:400;">VdZ_zch</div>
<div style="left:8px;top:465px;width:29px;height:16px;background:#C0DCC0;"></div>
<div style="left:37px;top:465px;width:26px;height:16px;background:#FFFF99;"></div>
<div style="left:63px;top:465px;width:43px;height:16px;background:#CC0055;"></div>
<div style="left:106px;top:465px;width:30px;height:16px;background:#FFFF99;"></div>
<div style="left:136px;top:465px;width:59px;height:16px;background:#99FFCC;"></div>
<div style="left:195px;top:465px;width:60px;height:16px;background:#FFFF99;"></div>
<div style="left:255px;top:465px;width:80px;height:16px;background:#FFFF00;"></div>
<div style="left:335px;top:465px;width:80px;height:16px;background:#FF66FF;"></div>
<div style="left:415px;top:465px;width:81px;height:16px;background:#66FF33;"></div>
<div class="t" style="left:8px;top:466.15px;font-size:14px;line-height:14px;color:#000;font-weight:400;width:29px;text-align:center;transform:scaleX(0.86);transform-origin:50% 0;">7</div>
<div class="t" style="left:37px;top:466.15px;font-size:14px;line-height:14px;color:#000;font-weight:400;width:26px;text-align:center;transform:scaleX(0.86);transform-origin:50% 0;">18</div>
<div class="t" style="left:63px;top:466.15px;font-size:14px;line-height:14px;color:#FFFF00;font-weight:400;width:43px;text-align:center;">красн</div>
<div class="t" style="left:110px;top:466.15px;font-size:14px;line-height:14px;color:#000;font-weight:400;">чет</div>
<div class="t" style="left:136px;top:466.15px;font-size:14px;line-height:14px;color:#000;font-weight:400;width:59px;text-align:center;transform:scaleX(0.86);transform-origin:50% 0;">1-18</div>
<div class="t" style="left:200px;top:466.15px;font-size:14px;line-height:14px;color:#000;font-weight:400;">2дюжи...</div>
<div class="t" style="left:255px;top:466.15px;font-size:14px;line-height:14px;color:#000;font-weight:400;width:80px;text-align:center;">3колонка</div>
<div class="t" style="left:335px;top:466.15px;font-size:14px;line-height:14px;color:#000;font-weight:400;width:80px;text-align:center;">3сиклайн</div>
<div class="t" style="left:418px;top:466.15px;font-size:14px;line-height:14px;color:#000;font-weight:400;">VdZ</div>
<div style="left:8px;top:482px;width:29px;height:16px;background:#C0DCC0;"></div>
<div style="left:37px;top:482px;width:26px;height:16px;background:#FFFF99;"></div>
<div style="left:63px;top:482px;width:43px;height:16px;background:#000000;"></div>
<div style="left:106px;top:482px;width:30px;height:16px;background:#66EE33;"></div>
<div style="left:136px;top:482px;width:59px;height:16px;background:#99FFCC;"></div>
<div style="left:195px;top:482px;width:60px;height:16px;background:#FFFF99;"></div>
<div style="left:255px;top:482px;width:80px;height:16px;background:#00FF00;"></div>
<div style="left:335px;top:482px;width:80px;height:16px;background:#FF66FF;"></div>
<div style="left:415px;top:482px;width:81px;height:16px;background:#FF9966;"></div>
<div class="t" style="left:8px;top:483.15px;font-size:14px;line-height:14px;color:#000;font-weight:400;width:29px;text-align:center;transform:scaleX(0.86);transform-origin:50% 0;">6</div>
<div class="t" style="left:37px;top:483.15px;font-size:14px;line-height:14px;color:#000;font-weight:400;width:26px;text-align:center;transform:scaleX(0.86);transform-origin:50% 0;">17</div>
<div class="t" style="left:63px;top:483.15px;font-size:14px;line-height:14px;color:#FFFF00;font-weight:400;width:43px;text-align:center;">черн</div>
<div class="t" style="left:110px;top:483.15px;font-size:14px;line-height:14px;color:#000;font-weight:400;">неч</div>
<div class="t" style="left:136px;top:483.15px;font-size:14px;line-height:14px;color:#000;font-weight:400;width:59px;text-align:center;transform:scaleX(0.86);transform-origin:50% 0;">1-18</div>
<div class="t" style="left:200px;top:483.15px;font-size:14px;line-height:14px;color:#000;font-weight:400;">2дюжи...</div>
<div class="t" style="left:255px;top:483.15px;font-size:14px;line-height:14px;color:#000;font-weight:400;width:80px;text-align:center;">2колонка</div>
<div class="t" style="left:335px;top:483.15px;font-size:14px;line-height:14px;color:#000;font-weight:400;width:80px;text-align:center;">3сиклайн</div>
<div class="t" style="left:418px;top:483.15px;font-size:14px;line-height:14px;color:#000;font-weight:400;">Orph</div>
<div style="left:8px;top:499px;width:29px;height:16px;background:#C0DCC0;"></div>
<div style="left:37px;top:499px;width:26px;height:16px;background:#FFFF99;"></div>
<div style="left:63px;top:499px;width:43px;height:16px;background:#CC0055;"></div>
<div style="left:106px;top:499px;width:30px;height:16px;background:#FFFF99;"></div>
<div style="left:136px;top:499px;width:59px;height:16px;background:#99FFCC;"></div>
<div style="left:195px;top:499px;width:60px;height:16px;background:#FFFF99;"></div>
<div style="left:255px;top:499px;width:80px;height:16px;background:#00FF00;"></div>
<div style="left:335px;top:499px;width:80px;height:16px;background:#FF66FF;"></div>
<div style="left:415px;top:499px;width:81px;height:16px;background:#FF9966;"></div>
<div class="t" style="left:8px;top:500.15px;font-size:14px;line-height:14px;color:#000;font-weight:400;width:29px;text-align:center;transform:scaleX(0.86);transform-origin:50% 0;">5</div>
<div class="t" style="left:37px;top:500.15px;font-size:14px;line-height:14px;color:#000;font-weight:400;width:26px;text-align:center;transform:scaleX(0.86);transform-origin:50% 0;">14</div>
<div class="t" style="left:63px;top:500.15px;font-size:14px;line-height:14px;color:#FFFF00;font-weight:400;width:43px;text-align:center;">красн</div>
<div class="t" style="left:110px;top:500.15px;font-size:14px;line-height:14px;color:#000;font-weight:400;">чет</div>
<div class="t" style="left:136px;top:500.15px;font-size:14px;line-height:14px;color:#000;font-weight:400;width:59px;text-align:center;transform:scaleX(0.86);transform-origin:50% 0;">1-18</div>
<div class="t" style="left:200px;top:500.15px;font-size:14px;line-height:14px;color:#000;font-weight:400;">2дюжи...</div>
<div class="t" style="left:255px;top:500.15px;font-size:14px;line-height:14px;color:#000;font-weight:400;width:80px;text-align:center;">2колонка</div>
<div class="t" style="left:335px;top:500.15px;font-size:14px;line-height:14px;color:#000;font-weight:400;width:80px;text-align:center;">3сиклайн</div>
<div class="t" style="left:418px;top:500.15px;font-size:14px;line-height:14px;color:#000;font-weight:400;">Orph</div>
<div style="left:8px;top:516px;width:29px;height:16px;background:#C0DCC0;"></div>
<div style="left:37px;top:516px;width:26px;height:16px;background:#FFFF99;"></div>
<div style="left:63px;top:516px;width:43px;height:16px;background:#CC0055;"></div>
<div style="left:106px;top:516px;width:30px;height:16px;background:#FFFF99;"></div>
<div style="left:136px;top:516px;width:59px;height:16px;background:#FF9966;"></div>
<div style="left:195px;top:516px;width:60px;height:16px;background:#FF66FF;"></div>
<div style="left:255px;top:516px;width:80px;height:16px;background:#FFFF00;"></div>
<div style="left:335px;top:516px;width:80px;height:16px;background:#66FF33;"></div>
<div style="left:415px;top:516px;width:81px;height:16px;background:#33CCFF;"></div>
<div class="t" style="left:8px;top:517.15px;font-size:14px;line-height:14px;color:#000;font-weight:400;width:29px;text-align:center;transform:scaleX(0.86);transform-origin:50% 0;">4</div>
<div class="t" style="left:37px;top:517.15px;font-size:14px;line-height:14px;color:#000;font-weight:400;width:26px;text-align:center;transform:scaleX(0.86);transform-origin:50% 0;">36</div>
<div class="t" style="left:63px;top:517.15px;font-size:14px;line-height:14px;color:#FFFF00;font-weight:400;width:43px;text-align:center;">красн</div>
<div class="t" style="left:110px;top:517.15px;font-size:14px;line-height:14px;color:#000;font-weight:400;">чет</div>
<div class="t" style="left:136px;top:517.15px;font-size:14px;line-height:14px;color:#000;font-weight:400;width:59px;text-align:center;transform:scaleX(0.86);transform-origin:50% 0;">19-36</div>
<div class="t" style="left:200px;top:517.15px;font-size:14px;line-height:14px;color:#000;font-weight:400;">3дюжи...</div>
<div class="t" style="left:255px;top:517.15px;font-size:14px;line-height:14px;color:#000;font-weight:400;width:80px;text-align:center;">3колонка</div>
<div class="t" style="left:335px;top:517.15px;font-size:14px;line-height:14px;color:#000;font-weight:400;width:80px;text-align:center;">6сиклайн</div>
<div class="t" style="left:418px;top:517.15px;font-size:14px;line-height:14px;color:#000;font-weight:400;">Tiers</div>
<div style="left:8px;top:533px;width:29px;height:16px;background:#C0DCC0;"></div>
<div style="left:37px;top:533px;width:26px;height:16px;background:#FFFF99;"></div>
<div style="left:63px;top:533px;width:43px;height:16px;background:#CC0055;"></div>
<div style="left:106px;top:533px;width:30px;height:16px;background:#FFFF99;"></div>
<div style="left:136px;top:533px;width:59px;height:16px;background:#FF9966;"></div>
<div style="left:195px;top:533px;width:60px;height:16px;background:#FF66FF;"></div>
<div style="left:255px;top:533px;width:80px;height:16px;background:#00FF00;"></div>
<div style="left:335px;top:533px;width:80px;height:16px;background:#66FF33;"></div>
<div style="left:415px;top:533px;width:81px;height:16px;background:#99FFCC;"></div>
<div class="t" style="left:8px;top:534.15px;font-size:14px;line-height:14px;color:#000;font-weight:400;width:29px;text-align:center;transform:scaleX(0.86);transform-origin:50% 0;">3</div>
<div class="t" style="left:37px;top:534.15px;font-size:14px;line-height:14px;color:#000;font-weight:400;width:26px;text-align:center;transform:scaleX(0.86);transform-origin:50% 0;">32</div>
<div class="t" style="left:63px;top:534.15px;font-size:14px;line-height:14px;color:#FFFF00;font-weight:400;width:43px;text-align:center;">красн</div>
<div class="t" style="left:110px;top:534.15px;font-size:14px;line-height:14px;color:#000;font-weight:400;">чет</div>
<div class="t" style="left:136px;top:534.15px;font-size:14px;line-height:14px;color:#000;font-weight:400;width:59px;text-align:center;transform:scaleX(0.86);transform-origin:50% 0;">19-36</div>
<div class="t" style="left:200px;top:534.15px;font-size:14px;line-height:14px;color:#000;font-weight:400;">3дюжи...</div>
<div class="t" style="left:255px;top:534.15px;font-size:14px;line-height:14px;color:#000;font-weight:400;width:80px;text-align:center;">2колонка</div>
<div class="t" style="left:335px;top:534.15px;font-size:14px;line-height:14px;color:#000;font-weight:400;width:80px;text-align:center;">6сиклайн</div>
<div class="t" style="left:418px;top:534.15px;font-size:14px;line-height:14px;color:#000;font-weight:400;">VdZ_zch</div>
<div style="left:8px;top:550px;width:29px;height:16px;background:#C0DCC0;"></div>
<div style="left:37px;top:550px;width:26px;height:16px;background:#FFFF99;"></div>
<div style="left:63px;top:550px;width:43px;height:16px;background:#CC0055;"></div>
<div style="left:106px;top:550px;width:30px;height:16px;background:#66EE33;"></div>
<div style="left:136px;top:550px;width:59px;height:16px;background:#99FFCC;"></div>
<div style="left:195px;top:550px;width:60px;height:16px;background:#33CCFF;"></div>
<div style="left:255px;top:550px;width:80px;height:16px;background:#FF00FF;"></div>
<div style="left:335px;top:550px;width:80px;height:16px;background:#33CCFF;"></div>
<div style="left:415px;top:550px;width:81px;height:16px;background:#FF9966;"></div>
<div class="t" style="left:8px;top:551.15px;font-size:14px;line-height:14px;color:#000;font-weight:400;width:29px;text-align:center;transform:scaleX(0.86);transform-origin:50% 0;">2</div>
<div class="t" style="left:37px;top:551.15px;font-size:14px;line-height:14px;color:#000;font-weight:400;width:26px;text-align:center;transform:scaleX(0.86);transform-origin:50% 0;">1</div>
<div class="t" style="left:63px;top:551.15px;font-size:14px;line-height:14px;color:#FFFF00;font-weight:400;width:43px;text-align:center;">красн</div>
<div class="t" style="left:110px;top:551.15px;font-size:14px;line-height:14px;color:#000;font-weight:400;">неч</div>
<div class="t" style="left:136px;top:551.15px;font-size:14px;line-height:14px;color:#000;font-weight:400;width:59px;text-align:center;transform:scaleX(0.86);transform-origin:50% 0;">1-18</div>
<div class="t" style="left:200px;top:551.15px;font-size:14px;line-height:14px;color:#000;font-weight:400;">1дюжи...</div>
<div class="t" style="left:255px;top:551.15px;font-size:14px;line-height:14px;color:#000;font-weight:400;width:80px;text-align:center;">1колонка</div>
<div class="t" style="left:335px;top:551.15px;font-size:14px;line-height:14px;color:#000;font-weight:400;width:80px;text-align:center;">1сиклайн</div>
<div class="t" style="left:418px;top:551.15px;font-size:14px;line-height:14px;color:#000;font-weight:400;">Orph</div>
<div style="left:8px;top:567px;width:29px;height:16px;background:#C0DCC0;"></div>
<div style="left:37px;top:567px;width:26px;height:16px;background:#FFFF99;"></div>
<div style="left:63px;top:567px;width:43px;height:16px;background:#CC0055;"></div>
<div style="left:106px;top:567px;width:30px;height:16px;background:#FFFF99;"></div>
<div style="left:136px;top:567px;width:59px;height:16px;background:#99FFCC;"></div>
<div style="left:195px;top:567px;width:60px;height:16px;background:#FFFF99;"></div>
<div style="left:255px;top:567px;width:80px;height:16px;background:#FFFF00;"></div>
<div style="left:335px;top:567px;width:80px;height:16px;background:#FF66FF;"></div>
<div style="left:415px;top:567px;width:81px;height:16px;background:#66FF33;"></div>
<div class="t" style="left:8px;top:568.15px;font-size:14px;line-height:14px;color:#000;font-weight:400;width:29px;text-align:center;transform:scaleX(0.86);transform-origin:50% 0;">1</div>
<div class="t" style="left:37px;top:568.15px;font-size:14px;line-height:14px;color:#000;font-weight:400;width:26px;text-align:center;transform:scaleX(0.86);transform-origin:50% 0;">18</div>
<div class="t" style="left:63px;top:568.15px;font-size:14px;line-height:14px;color:#FFFF00;font-weight:400;width:43px;text-align:center;">красн</div>
<div class="t" style="left:110px;top:568.15px;font-size:14px;line-height:14px;color:#000;font-weight:400;">чет</div>
<div class="t" style="left:136px;top:568.15px;font-size:14px;line-height:14px;color:#000;font-weight:400;width:59px;text-align:center;transform:scaleX(0.86);transform-origin:50% 0;">1-18</div>
<div class="t" style="left:200px;top:568.15px;font-size:14px;line-height:14px;color:#000;font-weight:400;">2дюжи...</div>
<div class="t" style="left:255px;top:568.15px;font-size:14px;line-height:14px;color:#000;font-weight:400;width:80px;text-align:center;">3колонка</div>
<div class="t" style="left:335px;top:568.15px;font-size:14px;line-height:14px;color:#000;font-weight:400;width:80px;text-align:center;">3сиклайн</div>
<div class="t" style="left:418px;top:568.15px;font-size:14px;line-height:14px;color:#000;font-weight:400;">VdZ</div>
<div style="left:37px;top:141px;width:1px;height:541px;background:#000080;"></div>
<div style="left:63px;top:141px;width:1px;height:541px;background:#000080;"></div>
<div style="left:106px;top:141px;width:1px;height:541px;background:#000080;"></div>
<div style="left:136px;top:141px;width:1px;height:541px;background:#000080;"></div>
<div style="left:195px;top:141px;width:1px;height:541px;background:#000080;"></div>
<div style="left:255px;top:141px;width:1px;height:541px;background:#000080;"></div>
<div style="left:335px;top:141px;width:1px;height:541px;background:#000080;"></div>
<div style="left:415px;top:141px;width:1px;height:541px;background:#000080;"></div>
<div style="left:496px;top:141px;width:1px;height:541px;background:#000080;"></div>
<div style="left:8px;top:158px;width:488px;height:1px;background:#000080;"></div>
<div style="left:8px;top:175px;width:488px;height:1px;background:#000080;"></div>
<div style="left:8px;top:192px;width:488px;height:1px;background:#000080;"></div>
<div style="left:8px;top:209px;width:488px;height:1px;background:#000080;"></div>
<div style="left:8px;top:226px;width:488px;height:1px;background:#000080;"></div>
<div style="left:8px;top:243px;width:488px;height:1px;background:#000080;"></div>
<div style="left:8px;top:260px;width:488px;height:1px;background:#000080;"></div>
<div style="left:8px;top:277px;width:488px;height:1px;background:#000080;"></div>
<div style="left:8px;top:294px;width:488px;height:1px;background:#000080;"></div>
<div style="left:8px;top:311px;width:488px;height:1px;background:#000080;"></div>
<div style="left:8px;top:328px;width:488px;height:1px;background:#000080;"></div>
<div style="left:8px;top:345px;width:488px;height:1px;background:#000080;"></div>
<div style="left:8px;top:362px;width:488px;height:1px;background:#000080;"></div>
<div style="left:8px;top:379px;width:488px;height:1px;background:#000080;"></div>
<div style="left:8px;top:396px;width:488px;height:1px;background:#000080;"></div>
<div style="left:8px;top:413px;width:488px;height:1px;background:#000080;"></div>
<div style="left:8px;top:430px;width:488px;height:1px;background:#000080;"></div>
<div style="left:8px;top:447px;width:488px;height:1px;background:#000080;"></div>
<div style="left:8px;top:464px;width:488px;height:1px;background:#000080;"></div>
<div style="left:8px;top:481px;width:488px;height:1px;background:#000080;"></div>
<div style="left:8px;top:498px;width:488px;height:1px;background:#000080;"></div>
<div style="left:8px;top:515px;width:488px;height:1px;background:#000080;"></div>
<div style="left:8px;top:532px;width:488px;height:1px;background:#000080;"></div>
<div style="left:8px;top:549px;width:488px;height:1px;background:#000080;"></div>
<div style="left:8px;top:566px;width:488px;height:1px;background:#000080;"></div>
<div style="left:8px;top:583px;width:488px;height:1px;background:#000080;"></div>
<div style="left:8px;top:600px;width:488px;height:1px;background:#000080;"></div>
<div style="left:8px;top:617px;width:488px;height:1px;background:#000080;"></div>
<div style="left:8px;top:634px;width:488px;height:1px;background:#000080;"></div>
<div style="left:8px;top:651px;width:488px;height:1px;background:#000080;"></div>
<div style="left:8px;top:668px;width:488px;height:1px;background:#000080;"></div>
<div class="t" style="left:13px;top:143.15px;font-size:14px;line-height:14px;color:#000;font-weight:400;">С...</div>
<div class="t" style="left:42px;top:143.15px;font-size:14px;line-height:14px;color:#000;font-weight:400;">Ч...</div>
<div class="t" style="left:68px;top:143.15px;font-size:14px;line-height:14px;color:#FFFF00;font-weight:400;">Кра...</div>
<div class="t" style="left:110px;top:143.15px;font-size:14px;line-height:14px;color:#000;font-weight:400;">чет</div>
<div class="t" style="left:136px;top:143.15px;font-size:14px;line-height:14px;color:#000;font-weight:400;width:59px;text-align:center;">больш</div>
<div class="t" style="left:199px;top:143.15px;font-size:14px;line-height:14px;color:#000;font-weight:400;">дюжина</div>
<div class="t" style="left:255px;top:143.15px;font-size:14px;line-height:14px;color:#000;font-weight:400;width:80px;text-align:center;">колонка</div>
<div class="t" style="left:335px;top:143.15px;font-size:14px;line-height:14px;color:#000;font-weight:400;width:80px;text-align:center;">сиклайн</div>
<div class="t" style="left:418px;top:143.15px;font-size:14px;line-height:14px;color:#000;font-weight:400;">сектор</div>
<div class="t" style="left:63px;top:160.15px;font-size:14px;line-height:14px;color:#FFFF00;font-weight:400;width:43px;text-align:center;">Черн</div>
<div class="t" style="left:110px;top:160.15px;font-size:14px;line-height:14px;color:#000;font-weight:400;">не...</div>
<div class="t" style="left:136px;top:160.15px;font-size:14px;line-height:14px;color:#000;font-weight:400;width:59px;text-align:center;">менш</div>
<div style="left:7px;top:723px;width:33px;height:33px;background:#0B6816;"></div>
<svg style="position:absolute;left:7px;top:723px" width="33" height="33" viewBox="0 0 33 33"><ellipse cx="16.5" cy="16.5" rx="14.6" ry="11.6" fill="none" stroke="#72C872" stroke-width="1"/><ellipse cx="16.5" cy="16.3" rx="2.9" ry="6.6" fill="none" stroke="#E8FFE8" stroke-width="1.7"/></svg>
<div style="left:42px;top:688px;width:33px;height:33px;background:#0B6816;"></div>
<div style="left:48px;top:695px;width:21px;height:18px;border-radius:50%;background:#E4362A;"></div>
<div class="t" style="left:42px;top:700.03px;font-size:10px;line-height:10px;color:#fff;font-weight:700;width:33px;text-align:center;font-family:'Liberation Mono',monospace;">3</div>
<div style="left:42px;top:723px;width:33px;height:33px;background:#0B6816;"></div>
<div style="left:48px;top:730px;width:21px;height:18px;border-radius:50%;background:#000;"></div>
<div class="t" style="left:42px;top:735.03px;font-size:10px;line-height:10px;color:#fff;font-weight:700;width:33px;text-align:center;font-family:'Liberation Mono',monospace;">2</div>
<div style="left:42px;top:758px;width:33px;height:33px;background:#0B6816;"></div>
<div style="left:48px;top:765px;width:21px;height:18px;border-radius:50%;background:#E4362A;"></div>
<div class="t" style="left:42px;top:770.03px;font-size:10px;line-height:10px;color:#fff;font-weight:700;width:33px;text-align:center;font-family:'Liberation Mono',monospace;">1</div>
<div style="left:77px;top:688px;width:33px;height:33px;background:#0B6816;"></div>
<div style="left:83px;top:695px;width:21px;height:18px;border-radius:50%;background:#000;"></div>
<div class="t" style="left:77px;top:700.03px;font-size:10px;line-height:10px;color:#fff;font-weight:700;width:33px;text-align:center;font-family:'Liberation Mono',monospace;">6</div>
<div style="left:77px;top:723px;width:33px;height:33px;background:#0B6816;"></div>
<div style="left:83px;top:730px;width:21px;height:18px;border-radius:50%;background:#E4362A;"></div>
<div class="t" style="left:77px;top:735.03px;font-size:10px;line-height:10px;color:#fff;font-weight:700;width:33px;text-align:center;font-family:'Liberation Mono',monospace;">5</div>
<div style="left:77px;top:758px;width:33px;height:33px;background:#0B6816;"></div>
<div style="left:83px;top:765px;width:21px;height:18px;border-radius:50%;background:#000;"></div>
<div class="t" style="left:77px;top:770.03px;font-size:10px;line-height:10px;color:#fff;font-weight:700;width:33px;text-align:center;font-family:'Liberation Mono',monospace;">4</div>
<div style="left:112px;top:688px;width:33px;height:33px;background:#0B6816;"></div>
<div style="left:118px;top:695px;width:21px;height:18px;border-radius:50%;background:#E4362A;"></div>
<div class="t" style="left:112px;top:700.03px;font-size:10px;line-height:10px;color:#fff;font-weight:700;width:33px;text-align:center;font-family:'Liberation Mono',monospace;">9</div>
<div style="left:112px;top:723px;width:33px;height:33px;background:#0B6816;"></div>
<div style="left:118px;top:730px;width:21px;height:18px;border-radius:50%;background:#000;"></div>
<div class="t" style="left:112px;top:735.03px;font-size:10px;line-height:10px;color:#fff;font-weight:700;width:33px;text-align:center;font-family:'Liberation Mono',monospace;">8</div>
<div style="left:112px;top:758px;width:33px;height:33px;background:#0B6816;"></div>
<div style="left:118px;top:765px;width:21px;height:18px;border-radius:50%;background:#E4362A;"></div>
<div class="t" style="left:112px;top:770.03px;font-size:10px;line-height:10px;color:#fff;font-weight:700;width:33px;text-align:center;font-family:'Liberation Mono',monospace;">7</div>
<div style="left:147px;top:688px;width:33px;height:33px;background:#0B6816;"></div>
<div style="left:153px;top:695px;width:21px;height:18px;border-radius:50%;background:#E4362A;"></div>
<div class="t" style="left:147px;top:700.03px;font-size:10px;line-height:10px;color:#fff;font-weight:700;width:33px;text-align:center;font-family:'Liberation Mono',monospace;">12</div>
<div style="left:147px;top:723px;width:33px;height:33px;background:#0B6816;"></div>
<div style="left:153px;top:730px;width:21px;height:18px;border-radius:50%;background:#000;"></div>
<div class="t" style="left:147px;top:735.03px;font-size:10px;line-height:10px;color:#fff;font-weight:700;width:33px;text-align:center;font-family:'Liberation Mono',monospace;">11</div>
<div style="left:147px;top:758px;width:33px;height:33px;background:#0B6816;"></div>
<div style="left:153px;top:765px;width:21px;height:18px;border-radius:50%;background:#000;"></div>
<div class="t" style="left:147px;top:770.03px;font-size:10px;line-height:10px;color:#fff;font-weight:700;width:33px;text-align:center;font-family:'Liberation Mono',monospace;">10</div>
<div style="left:182px;top:688px;width:33px;height:33px;background:#0B6816;"></div>
<div style="left:188px;top:695px;width:21px;height:18px;border-radius:50%;background:#000;"></div>
<div class="t" style="left:182px;top:700.03px;font-size:10px;line-height:10px;color:#fff;font-weight:700;width:33px;text-align:center;font-family:'Liberation Mono',monospace;">15</div>
<div style="left:182px;top:723px;width:33px;height:33px;background:#0B6816;"></div>
<div style="left:188px;top:730px;width:21px;height:18px;border-radius:50%;background:#E4362A;"></div>
<div class="t" style="left:182px;top:735.03px;font-size:10px;line-height:10px;color:#fff;font-weight:700;width:33px;text-align:center;font-family:'Liberation Mono',monospace;">14</div>
<div style="left:182px;top:758px;width:33px;height:33px;background:#0B6816;"></div>
<div style="left:188px;top:765px;width:21px;height:18px;border-radius:50%;background:#000;"></div>
<div class="t" style="left:182px;top:770.03px;font-size:10px;line-height:10px;color:#fff;font-weight:700;width:33px;text-align:center;font-family:'Liberation Mono',monospace;">13</div>
<div style="left:217px;top:688px;width:33px;height:33px;background:#0B6816;"></div>
<div style="left:223px;top:695px;width:21px;height:18px;border-radius:50%;background:#E4362A;"></div>
<div class="t" style="left:217px;top:700.03px;font-size:10px;line-height:10px;color:#fff;font-weight:700;width:33px;text-align:center;font-family:'Liberation Mono',monospace;">18</div>
<div style="left:217px;top:723px;width:33px;height:33px;background:#0B6816;"></div>
<div style="left:223px;top:730px;width:21px;height:18px;border-radius:50%;background:#000;"></div>
<div class="t" style="left:217px;top:735.03px;font-size:10px;line-height:10px;color:#fff;font-weight:700;width:33px;text-align:center;font-family:'Liberation Mono',monospace;">17</div>
<div style="left:217px;top:758px;width:33px;height:33px;background:#0B6816;"></div>
<div style="left:223px;top:765px;width:21px;height:18px;border-radius:50%;background:#E4362A;"></div>
<div class="t" style="left:217px;top:770.03px;font-size:10px;line-height:10px;color:#fff;font-weight:700;width:33px;text-align:center;font-family:'Liberation Mono',monospace;">16</div>
<div style="left:252px;top:688px;width:33px;height:33px;background:#0B6816;"></div>
<div style="left:258px;top:695px;width:21px;height:18px;border-radius:50%;background:#E4362A;"></div>
<div class="t" style="left:252px;top:700.03px;font-size:10px;line-height:10px;color:#fff;font-weight:700;width:33px;text-align:center;font-family:'Liberation Mono',monospace;">21</div>
<div style="left:252px;top:723px;width:33px;height:33px;background:#0B6816;"></div>
<div style="left:258px;top:730px;width:21px;height:18px;border-radius:50%;background:#000;"></div>
<div class="t" style="left:252px;top:735.03px;font-size:10px;line-height:10px;color:#fff;font-weight:700;width:33px;text-align:center;font-family:'Liberation Mono',monospace;">20</div>
<div style="left:252px;top:758px;width:33px;height:33px;background:#0B6816;"></div>
<div style="left:258px;top:765px;width:21px;height:18px;border-radius:50%;background:#E4362A;"></div>
<div class="t" style="left:252px;top:770.03px;font-size:10px;line-height:10px;color:#fff;font-weight:700;width:33px;text-align:center;font-family:'Liberation Mono',monospace;">19</div>
<div style="left:287px;top:688px;width:33px;height:33px;background:#0B6816;"></div>
<div style="left:293px;top:695px;width:21px;height:18px;border-radius:50%;background:#000;"></div>
<div class="t" style="left:287px;top:700.03px;font-size:10px;line-height:10px;color:#fff;font-weight:700;width:33px;text-align:center;font-family:'Liberation Mono',monospace;">24</div>
<div style="left:287px;top:723px;width:33px;height:33px;background:#0B6816;"></div>
<div style="left:293px;top:730px;width:21px;height:18px;border-radius:50%;background:#E4362A;"></div>
<div class="t" style="left:287px;top:735.03px;font-size:10px;line-height:10px;color:#fff;font-weight:700;width:33px;text-align:center;font-family:'Liberation Mono',monospace;">23</div>
<div style="left:287px;top:758px;width:33px;height:33px;background:#0B6816;"></div>
<div style="left:293px;top:765px;width:21px;height:18px;border-radius:50%;background:#000;"></div>
<div class="t" style="left:287px;top:770.03px;font-size:10px;line-height:10px;color:#fff;font-weight:700;width:33px;text-align:center;font-family:'Liberation Mono',monospace;">22</div>
<div style="left:322px;top:688px;width:33px;height:33px;background:#0B6816;"></div>
<div style="left:328px;top:695px;width:21px;height:18px;border-radius:50%;background:#E4362A;"></div>
<div class="t" style="left:322px;top:700.03px;font-size:10px;line-height:10px;color:#fff;font-weight:700;width:33px;text-align:center;font-family:'Liberation Mono',monospace;">27</div>
<div style="left:322px;top:723px;width:33px;height:33px;background:#0B6816;"></div>
<div style="left:328px;top:730px;width:21px;height:18px;border-radius:50%;background:#000;"></div>
<div class="t" style="left:322px;top:735.03px;font-size:10px;line-height:10px;color:#fff;font-weight:700;width:33px;text-align:center;font-family:'Liberation Mono',monospace;">26</div>
<div style="left:322px;top:758px;width:33px;height:33px;background:#0B6816;"></div>
<div style="left:328px;top:765px;width:21px;height:18px;border-radius:50%;background:#E4362A;"></div>
<div class="t" style="left:322px;top:770.03px;font-size:10px;line-height:10px;color:#fff;font-weight:700;width:33px;text-align:center;font-family:'Liberation Mono',monospace;">25</div>
<div style="left:357px;top:688px;width:33px;height:33px;background:#0B6816;"></div>
<div style="left:363px;top:695px;width:21px;height:18px;border-radius:50%;background:#E4362A;"></div>
<div class="t" style="left:357px;top:700.03px;font-size:10px;line-height:10px;color:#fff;font-weight:700;width:33px;text-align:center;font-family:'Liberation Mono',monospace;">30</div>
<div style="left:357px;top:723px;width:33px;height:33px;background:#0B6816;"></div>
<div style="left:363px;top:730px;width:21px;height:18px;border-radius:50%;background:#000;"></div>
<div class="t" style="left:357px;top:735.03px;font-size:10px;line-height:10px;color:#fff;font-weight:700;width:33px;text-align:center;font-family:'Liberation Mono',monospace;">29</div>
<div style="left:357px;top:758px;width:33px;height:33px;background:#0B6816;"></div>
<div style="left:363px;top:765px;width:21px;height:18px;border-radius:50%;background:#000;"></div>
<div class="t" style="left:357px;top:770.03px;font-size:10px;line-height:10px;color:#fff;font-weight:700;width:33px;text-align:center;font-family:'Liberation Mono',monospace;">28</div>
<div style="left:392px;top:688px;width:33px;height:33px;background:#0B6816;"></div>
<div style="left:398px;top:695px;width:21px;height:18px;border-radius:50%;background:#000;"></div>
<div class="t" style="left:392px;top:700.03px;font-size:10px;line-height:10px;color:#fff;font-weight:700;width:33px;text-align:center;font-family:'Liberation Mono',monospace;">33</div>
<div style="left:392px;top:723px;width:33px;height:33px;background:#0B6816;"></div>
<div style="left:398px;top:730px;width:21px;height:18px;border-radius:50%;background:#E4362A;"></div>
<div class="t" style="left:392px;top:735.03px;font-size:10px;line-height:10px;color:#fff;font-weight:700;width:33px;text-align:center;font-family:'Liberation Mono',monospace;">32</div>
<div style="left:392px;top:758px;width:33px;height:33px;background:#0B6816;"></div>
<div style="left:398px;top:765px;width:21px;height:18px;border-radius:50%;background:#000;"></div>
<div class="t" style="left:392px;top:770.03px;font-size:10px;line-height:10px;color:#fff;font-weight:700;width:33px;text-align:center;font-family:'Liberation Mono',monospace;">31</div>
<div style="left:427px;top:688px;width:33px;height:33px;background:#0B6816;"></div>
<div style="left:433px;top:695px;width:21px;height:18px;border-radius:50%;background:#E4362A;"></div>
<div class="t" style="left:427px;top:700.03px;font-size:10px;line-height:10px;color:#fff;font-weight:700;width:33px;text-align:center;font-family:'Liberation Mono',monospace;">36</div>
<div style="left:427px;top:723px;width:33px;height:33px;background:#0B6816;"></div>
<div style="left:433px;top:730px;width:21px;height:18px;border-radius:50%;background:#000;"></div>
<div class="t" style="left:427px;top:735.03px;font-size:10px;line-height:10px;color:#fff;font-weight:700;width:33px;text-align:center;font-family:'Liberation Mono',monospace;">35</div>
<div style="left:427px;top:758px;width:33px;height:33px;background:#0B6816;"></div>
<div style="left:433px;top:765px;width:21px;height:18px;border-radius:50%;background:#E4362A;"></div>
<div class="t" style="left:427px;top:770.03px;font-size:10px;line-height:10px;color:#fff;font-weight:700;width:33px;text-align:center;font-family:'Liberation Mono',monospace;">34</div>
<div style="left:4px;top:799px;width:493px;height:1px;background:#ACA899;"></div>
<div style="left:501px;top:26px;width:556px;height:2px;background:#fff;"></div>
<div style="left:501px;top:26px;width:2px;height:774px;background:#fff;"></div>
<div style="left:1055px;top:26px;width:2px;height:774px;background:#ACA899;"></div>
<div class="t" style="left:505.5px;top:29.69px;font-size:11px;line-height:11px;color:#000;font-weight:400;letter-spacing:-0.1px;">Ряд Фибоначчи=1 1 2 3 5 8 13 21 34 55 89 144 233 377 610</div>
<div class="t" style="left:822.5px;top:29.69px;font-size:11px;line-height:11px;color:#000;font-weight:400;letter-spacing:-0.1px;">Ряд Мартингейл=1 2 4 8 16 32 64 128 256 512</div>
<div class="t" style="left:505.5px;top:45.69px;font-size:11px;line-height:11px;color:#000;font-weight:400;letter-spacing:-0.1px;">Ряд Tiers = 5 8 10 11 13 16 23 24 27 30 33 36</div>
<div class="t" style="left:822.5px;top:45.69px;font-size:11px;line-height:11px;color:#000;font-weight:400;letter-spacing:-0.1px;">Ряд Orph = 1 6 9 14 17 20 31 34</div>
<div class="t" style="left:505.5px;top:61.69px;font-size:11px;line-height:11px;color:#000;font-weight:400;letter-spacing:-0.1px;">Ряд VdZ = 0 2 3 4 7 12 15 18 19 21 22 25 26 28 29 32 35</div>
<div class="t" style="left:822.5px;top:61.69px;font-size:11px;line-height:11px;color:#000;font-weight:400;letter-spacing:-0.1px;">Ряд VdZ_zch = 0 3 12 15 26 32 35</div>
<div style="left:751px;top:75px;width:278px;height:39px;border:1px solid;border-color:#ACA899 #fff #fff #ACA899;"></div>
<div style="left:759px;top:82px;width:85px;height:23px;border:1px solid #003C74;border-radius:3px;background:linear-gradient(#FFFFFF 0%,#F8F8F5 45%,#F0EFEA 85%,#DEDCD2 100%);"></div>
<div class="t" style="left:759px;top:89.99px;font-size:11px;line-height:11px;color:#000;font-weight:400;width:87px;text-align:center;">Автоспин старт</div>
<div class="t" style="left:862px;top:84.69px;font-size:11px;line-height:11px;color:#000;font-weight:400;">Временная</div>
<div class="t" style="left:862px;top:96.69px;font-size:11px;line-height:11px;color:#000;font-weight:400;">задержка, мс</div>
<div style="left:949px;top:80px;width:71px;height:30px;border:1px solid #7F9DB9;background:#fff;"></div>
<div class="t" style="left:952px;top:86.76px;font-size:18px;line-height:18px;color:#000;font-weight:400;-webkit-text-stroke:0.5px #000;">0</div>
<div style="left:1003px;top:83px;width:14px;height:10px;border:1px solid #1C3F7A;border-radius:2px;background:linear-gradient(#FFFFFF,#D8DCE8);"></div>
<svg style="position:absolute;left:1003px;top:84px" width="16" height="10" viewBox="0 0 16 10"><path d="M3 7 L7.5 3 L12 7 Z" fill="#000"/></svg>
<div style="left:1003px;top:97px;width:14px;height:10px;border:1px solid #1C3F7A;border-radius:2px;background:linear-gradient(#FFFFFF,#D8DCE8);"></div>
<svg style="position:absolute;left:1003px;top:98px" width="16" height="10" viewBox="0 0 16 10"><path d="M3 3 L7.5 7 L12 3 Z" fill="#000"/></svg>
<div class="t" style="left:504px;top:111.61px;font-size:17px;line-height:17px;color:#000;font-weight:400;letter-spacing:0.45px;-webkit-text-stroke:0.25px #000;">Сумма на счете = 0</div>
<div style="left:501px;top:130px;width:554px;height:1px;background:#ACA899;"></div>
<div style="left:501px;top:131px;width:554px;height:2px;background:#fff;"></div>
<div style="left:503px;top:155px;width:548px;height:474px;border:1px solid #919B9C;background:#FCFCFE;"></div>
<div style="left:505px;top:137px;width:152px;height:17px;border:1px solid #919B9C;border-bottom:none;border-radius:3px 3px 0 0;background:linear-gradient(#FFFFFF,#F3F3EF 60%,#E5E4DC);"></div>
<div class="t" style="left:511.5px;top:141.69px;font-size:11px;line-height:11px;color:#000;font-weight:400;">Деление колеса на сектора</div>
<div style="left:660px;top:137px;width:39px;height:17px;border:1px solid #919B9C;border-bottom:none;border-radius:3px 3px 0 0;background:linear-gradient(#FFFFFF,#F3F3EF 60%,#E5E4DC);"></div>
<div class="t" style="left:666.5px;top:141.69px;font-size:11px;line-height:11px;color:#000;font-weight:400;">MD5</div>
<div style="left:702px;top:137px;width:77px;height:17px;border:1px solid #919B9C;border-bottom:none;border-radius:3px 3px 0 0;background:linear-gradient(#FFFFFF,#F3F3EF 60%,#E5E4DC);"></div>
<div class="t" style="left:708.5px;top:141.69px;font-size:11px;line-height:11px;color:#000;font-weight:400;">Контроль игр</div>
<div style="left:782px;top:137px;width:101px;height:17px;border:1px solid #919B9C;border-bottom:none;border-radius:3px 3px 0 0;background:linear-gradient(#FFFFFF,#F3F3EF 60%,#E5E4DC);"></div>
<div class="t" style="left:788.5px;top:141.69px;font-size:11px;line-height:11px;color:#000;font-weight:400;">Различные статьи</div>
<div style="left:886px;top:134px;width:43px;height:22px;border:1px solid #919B9C;border-bottom:none;border-radius:3px 3px 0 0;background:#FCFCFE;"></div>
<div style="left:886px;top:134px;width:45px;height:3px;border-radius:3px 3px 0 0;background:linear-gradient(#E68B2C,#FFC73C);"></div>
<div class="t" style="left:894px;top:138.69px;font-size:11px;line-height:11px;color:#000;font-weight:400;">Excel</div>
<div style="left:1022px;top:137px;width:31px;height:15px;border-radius:2px;background:linear-gradient(#DCE6FA,#BCCEF5);"></div>
<svg style="position:absolute;left:1022px;top:137px" width="32" height="15" viewBox="0 0 32 15"><path d="M10 4 L7 7.5 L10 11" fill="none" stroke="#4D6185" stroke-width="1.6"/><path d="M21 4 L24 7.5 L21 11" fill="none" stroke="#4D6185" stroke-width="1.6"/></svg>
<div style="left:507px;top:158px;width:2px;height:18px;background:#A9C2F0;"></div>
<div style="left:509px;top:158px;width:92px;height:18px;background:#fff;"></div>
<div class="t" style="left:509px;top:161.34px;font-size:12px;line-height:12px;color:#000;font-weight:400;width:92px;text-align:center;">A4</div>
<div style="left:601px;top:159px;width:74px;height:17px;background:#A4BEF4;"></div>
<svg style="position:absolute;left:606px;top:165px" width="10" height="6" viewBox="0 0 10 6"><path d="M1 1 L8.5 1 L4.75 5 Z" fill="#000"/></svg>
<div class="t" style="left:663px;top:161.00px;font-size:13px;line-height:13px;color:#000;font-weight:400;font-family:'Liberation Serif';font-style:italic;letter-spacing:-1px;">fx</div>
<div style="left:675px;top:158px;width:375px;height:18px;background:#fff;"></div>
<div style="left:507px;top:175px;width:543px;height:1px;background:#A9C2F0;"></div>
<div class="t" style="left:683px;top:160.92px;font-size:12.5px;line-height:12.5px;color:#000;font-weight:400;">Спин</div>
<div style="left:507px;top:176px;width:527px;height:435px;background:#fff;"></div>
<div style="left:507px;top:176px;width:527px;height:2px;background:#8E8B7E;"></div>
<div style="left:507px;top:176px;width:1px;height:435px;background:#808080;"></div>
<div style="left:508px;top:178px;width:26px;height:16px;background:#ECE9D8;"></div>
<div style="left:534px;top:178px;width:499px;height:16px;background:#FEBE72;"></div>
<div style="left:534px;top:194px;width:499px;height:1px;background:#000080;"></div>
<div class="t" style="left:534px;top:180.00px;font-size:13px;line-height:13px;color:#000;font-weight:400;width:64px;text-align:center;">A</div>
<div class="t" style="left:598px;top:180.00px;font-size:13px;line-height:13px;color:#000;font-weight:400;width:64px;text-align:center;">B</div>
<div style="left:598px;top:178px;width:1px;height:17px;background:#000080;"></div>
<div class="t" style="left:662px;top:180.00px;font-size:13px;line-height:13px;color:#000;font-weight:400;width:64px;text-align:center;">C</div>
<div style="left:662px;top:178px;width:1px;height:17px;background:#000080;"></div>
<div class="t" style="left:726px;top:180.00px;font-size:13px;line-height:13px;color:#000;font-weight:400;width:64px;text-align:center;">D</div>
<div style="left:726px;top:178px;width:1px;height:17px;background:#000080;"></div>
<div class="t" style="left:790px;top:180.00px;font-size:13px;line-height:13px;color:#000;font-weight:400;width:64px;text-align:center;">E</div>
<div style="left:790px;top:178px;width:1px;height:17px;background:#000080;"></div>
<div class="t" style="left:854px;top:180.00px;font-size:13px;line-height:13px;color:#000;font-weight:400;width:64px;text-align:center;">F</div>
<div style="left:854px;top:178px;width:1px;height:17px;background:#000080;"></div>
<div class="t" style="left:918px;top:180.00px;font-size:13px;line-height:13px;color:#000;font-weight:400;width:64px;text-align:center;">G</div>
<div style="left:918px;top:178px;width:1px;height:17px;background:#000080;"></div>
<div class="t" style="left:982px;top:180.00px;font-size:13px;line-height:13px;color:#000;font-weight:400;width:64px;text-align:center;">H</div>
<div style="left:982px;top:178px;width:1px;height:17px;background:#000080;"></div>
<div style="left:508px;top:194px;width:26px;height:17px;background:#ECE9D8;"></div>
<div style="left:508px;top:211px;width:26px;height:1px;background:#8E8B7E;"></div>
<div class="t" style="left:508px;top:197.00px;font-size:13px;line-height:13px;color:#000;font-weight:400;width:26px;text-align:center;">1</div>
<div style="left:508px;top:211px;width:26px;height:17px;background:#ECE9D8;"></div>
<div style="left:508px;top:228px;width:26px;height:1px;background:#8E8B7E;"></div>
<div class="t" style="left:508px;top:214.00px;font-size:13px;line-height:13px;color:#000;font-weight:400;width:26px;text-align:center;">2</div>
<div style="left:508px;top:228px;width:26px;height:17px;background:#ECE9D8;"></div>
<div style="left:508px;top:245px;width:26px;height:1px;background:#8E8B7E;"></div>
<div class="t" style="left:508px;top:231.00px;font-size:13px;line-height:13px;color:#000;font-weight:400;width:26px;text-align:center;">3</div>
<div style="left:508px;top:245px;width:26px;height:17px;background:#FEBE72;"></div>
<div class="t" style="left:508px;top:248.00px;font-size:13px;line-height:13px;color:#000;font-weight:400;width:26px;text-align:center;">4</div>
<div style="left:508px;top:262px;width:26px;height:17px;background:#FEBE72;"></div>
<div class="t" style="left:508px;top:265.00px;font-size:13px;line-height:13px;color:#000;font-weight:400;width:26px;text-align:center;">5</div>
<div style="left:508px;top:279px;width:26px;height:17px;background:#FEBE72;"></div>
<div class="t" style="left:508px;top:282.00px;font-size:13px;line-height:13px;color:#000;font-weight:400;width:26px;text-align:center;">6</div>
<div style="left:508px;top:296px;width:26px;height:17px;background:#FEBE72;"></div>
<div class="t" style="left:508px;top:299.00px;font-size:13px;line-height:13px;color:#000;font-weight:400;width:26px;text-align:center;">7</div>
<div style="left:508px;top:313px;width:26px;height:17px;background:#FEBE72;"></div>
<div class="t" style="left:508px;top:316.00px;font-size:13px;line-height:13px;color:#000;font-weight:400;width:26px;text-align:center;">8</div>
<div style="left:508px;top:330px;width:26px;height:17px;background:#FEBE72;"></div>
<div class="t" style="left:508px;top:333.00px;font-size:13px;line-height:13px;color:#000;font-weight:400;width:26px;text-align:center;">9</div>
<div style="left:508px;top:347px;width:26px;height:17px;background:#FEBE72;"></div>
<div class="t" style="left:508px;top:350.00px;font-size:13px;line-height:13px;color:#000;font-weight:400;width:26px;text-align:center;">10</div>
<div style="left:508px;top:364px;width:26px;height:17px;background:#FEBE72;"></div>
<div class="t" style="left:508px;top:367.00px;font-size:13px;line-height:13px;color:#000;font-weight:400;width:26px;text-align:center;">11</div>
<div style="left:508px;top:381px;width:26px;height:17px;background:#FEBE72;"></div>
<div class="t" style="left:508px;top:384.00px;font-size:13px;line-height:13px;color:#000;font-weight:400;width:26px;text-align:center;">12</div>
<div style="left:508px;top:398px;width:26px;height:17px;background:#FEBE72;"></div>
<div class="t" style="left:508px;top:401.00px;font-size:13px;line-height:13px;color:#000;font-weight:400;width:26px;text-align:center;">13</div>
<div style="left:508px;top:415px;width:26px;height:17px;background:#FEBE72;"></div>
<div class="t" style="left:508px;top:418.00px;font-size:13px;line-height:13px;color:#000;font-weight:400;width:26px;text-align:center;">14</div>
<div style="left:508px;top:432px;width:26px;height:17px;background:#FEBE72;"></div>
<div class="t" style="left:508px;top:435.00px;font-size:13px;line-height:13px;color:#000;font-weight:400;width:26px;text-align:center;">15</div>
<div style="left:508px;top:449px;width:26px;height:17px;background:#FEBE72;"></div>
<div class="t" style="left:508px;top:452.00px;font-size:13px;line-height:13px;color:#000;font-weight:400;width:26px;text-align:center;">16</div>
<div style="left:508px;top:466px;width:26px;height:17px;background:#FEBE72;"></div>
<div class="t" style="left:508px;top:469.00px;font-size:13px;line-height:13px;color:#000;font-weight:400;width:26px;text-align:center;">17</div>
<div style="left:508px;top:483px;width:26px;height:17px;background:#FEBE72;"></div>
<div class="t" style="left:508px;top:486.00px;font-size:13px;line-height:13px;color:#000;font-weight:400;width:26px;text-align:center;">18</div>
<div style="left:508px;top:500px;width:26px;height:17px;background:#FEBE72;"></div>
<div class="t" style="left:508px;top:503.00px;font-size:13px;line-height:13px;color:#000;font-weight:400;width:26px;text-align:center;">19</div>
<div style="left:508px;top:517px;width:26px;height:17px;background:#FEBE72;"></div>
<div class="t" style="left:508px;top:520.00px;font-size:13px;line-height:13px;color:#000;font-weight:400;width:26px;text-align:center;">20</div>
<div style="left:508px;top:534px;width:26px;height:17px;background:#FEBE72;"></div>
<div class="t" style="left:508px;top:537.00px;font-size:13px;line-height:13px;color:#000;font-weight:400;width:26px;text-align:center;">21</div>
<div style="left:508px;top:551px;width:26px;height:17px;background:#FEBE72;"></div>
<div class="t" style="left:508px;top:554.00px;font-size:13px;line-height:13px;color:#000;font-weight:400;width:26px;text-align:center;">22</div>
<div style="left:508px;top:568px;width:26px;height:17px;background:#FEBE72;"></div>
<div class="t" style="left:508px;top:571.00px;font-size:13px;line-height:13px;color:#000;font-weight:400;width:26px;text-align:center;">23</div>
<div style="left:508px;top:585px;width:26px;height:17px;background:#FEBE72;"></div>
<div class="t" style="left:508px;top:588.00px;font-size:13px;line-height:13px;color:#000;font-weight:400;width:26px;text-align:center;">24</div>
<div style="left:508px;top:602px;width:26px;height:17px;background:#FEBE72;"></div>
<div class="t" style="left:508px;top:605.00px;font-size:13px;line-height:13px;color:#000;font-weight:400;width:26px;text-align:center;">25</div>
<div style="left:508px;top:262px;width:26px;height:1px;background:#000080;"></div>
<div style="left:508px;top:279px;width:26px;height:1px;background:#000080;"></div>
<div style="left:508px;top:296px;width:26px;height:1px;background:#000080;"></div>
<div style="left:508px;top:313px;width:26px;height:1px;background:#000080;"></div>
<div style="left:508px;top:330px;width:26px;height:1px;background:#000080;"></div>
<div style="left:508px;top:347px;width:26px;height:1px;background:#000080;"></div>
<div style="left:508px;top:364px;width:26px;height:1px;background:#000080;"></div>
<div style="left:508px;top:381px;width:26px;height:1px;background:#000080;"></div>
<div style="left:508px;top:398px;width:26px;height:1px;background:#000080;"></div>
<div style="left:508px;top:415px;width:26px;height:1px;background:#000080;"></div>
<div style="left:508px;top:432px;width:26px;height:1px;background:#000080;"></div>
<div style="left:508px;top:449px;width:26px;height:1px;background:#000080;"></div>
<div style="left:508px;top:466px;width:26px;height:1px;background:#000080;"></div>
<div style="left:508px;top:483px;width:26px;height:1px;background:#000080;"></div>
<div style="left:508px;top:500px;width:26px;height:1px;background:#000080;"></div>
<div style="left:508px;top:517px;width:26px;height:1px;background:#000080;"></div>
<div style="left:508px;top:534px;width:26px;height:1px;background:#000080;"></div>
<div style="left:508px;top:551px;width:26px;height:1px;background:#000080;"></div>
<div style="left:508px;top:568px;width:26px;height:1px;background:#000080;"></div>
<div style="left:508px;top:585px;width:26px;height:1px;background:#000080;"></div>
<div style="left:508px;top:602px;width:26px;height:1px;background:#000080;"></div>
<div style="left:508px;top:211px;width:26px;height:1px;background:#8E8B7E;"></div>
<div style="left:508px;top:228px;width:26px;height:1px;background:#8E8B7E;"></div>
<div style="left:533px;top:245px;width:2px;height:374px;background:#000080;"></div>
<div style="left:533px;top:177px;width:1px;height:68px;background:#8E8B7E;"></div>
<div style="left:508px;top:194px;width:26px;height:1px;background:#8E8B7E;"></div>
<div style="left:507px;top:176px;width:1px;height:452px;background:#8E8B7E;"></div>
<div style="left:534px;top:211px;width:499px;height:1px;background:#D0D0D0;"></div>
<div style="left:534px;top:228px;width:499px;height:1px;background:#D0D0D0;"></div>
<div style="left:598px;top:194px;width:1px;height:50px;background:#D0D0D0;"></div>
<div style="left:662px;top:194px;width:1px;height:50px;background:#D0D0D0;"></div>
<div style="left:726px;top:194px;width:1px;height:50px;background:#D0D0D0;"></div>
<div style="left:790px;top:194px;width:1px;height:50px;background:#D0D0D0;"></div>
<div style="left:854px;top:194px;width:1px;height:50px;background:#D0D0D0;"></div>
<div style="left:918px;top:194px;width:1px;height:50px;background:#D0D0D0;"></div>
<div style="left:982px;top:194px;width:1px;height:50px;background:#D0D0D0;"></div>
<div style="left:535px;top:245px;width:498px;height:366px;background:#B8CCEA;"></div>
<div style="left:535px;top:245px;width:63px;height:17px;background:#fff;"></div>
<div style="left:535px;top:262px;width:498px;height:1px;background:#CFC2B0;"></div>
<div style="left:535px;top:279px;width:498px;height:1px;background:#CFC2B0;"></div>
<div style="left:535px;top:296px;width:498px;height:1px;background:#CFC2B0;"></div>
<div style="left:535px;top:313px;width:498px;height:1px;background:#CFC2B0;"></div>
<div style="left:535px;top:330px;width:498px;height:1px;background:#CFC2B0;"></div>
<div style="left:535px;top:347px;width:498px;height:1px;background:#CFC2B0;"></div>
<div style="left:535px;top:364px;width:498px;height:1px;background:#CFC2B0;"></div>
<div style="left:535px;top:381px;width:498px;height:1px;background:#CFC2B0;"></div>
<div style="left:535px;top:398px;width:498px;height:1px;background:#CFC2B0;"></div>
<div style="left:535px;top:415px;width:498px;height:1px;background:#CFC2B0;"></div>
<div style="left:535px;top:432px;width:498px;height:1px;background:#CFC2B0;"></div>
<div style="left:535px;top:449px;width:498px;height:1px;background:#CFC2B0;"></div>
<div style="left:535px;top:466px;width:498px;height:1px;background:#CFC2B0;"></div>
<div style="left:535px;top:483px;width:498px;height:1px;background:#CFC2B0;"></div>
<div style="left:535px;top:500px;width:498px;height:1px;background:#CFC2B0;"></div>
<div style="left:535px;top:517px;width:498px;height:1px;background:#CFC2B0;"></div>
<div style="left:535px;top:534px;width:498px;height:1px;background:#CFC2B0;"></div>
<div style="left:535px;top:551px;width:498px;height:1px;background:#CFC2B0;"></div>
<div style="left:535px;top:568px;width:498px;height:1px;background:#CFC2B0;"></div>
<div style="left:535px;top:585px;width:498px;height:1px;background:#CFC2B0;"></div>
<div style="left:535px;top:602px;width:498px;height:1px;background:#CFC2B0;"></div>
<div style="left:598px;top:245px;width:1px;height:366px;background:#CFC2B0;"></div>
<div style="left:662px;top:245px;width:1px;height:366px;background:#CFC2B0;"></div>
<div style="left:726px;top:245px;width:1px;height:366px;background:#CFC2B0;"></div>
<div style="left:790px;top:245px;width:1px;height:366px;background:#CFC2B0;"></div>
<div style="left:854px;top:245px;width:1px;height:366px;background:#CFC2B0;"></div>
<div style="left:918px;top:245px;width:1px;height:366px;background:#CFC2B0;"></div>
<div style="left:982px;top:245px;width:1px;height:366px;background:#CFC2B0;"></div>
<div style="left:534px;top:244px;width:499px;height:3px;background:#000;"></div>
<div style="left:534px;top:247px;width:2px;height:15px;background:#000;"></div>
<div style="left:535px;top:223px;width:18px;height:18px;border:1px solid #0A246A;background:#fff;"></div>
<svg style="position:absolute;left:535px;top:223px" width="20" height="20" viewBox="0 0 20 20"><rect x="2.8" y="4.6" width="12.6" height="11" fill="#C4C4C4" stroke="#101010" stroke-width="1.2"/><path d="M5.5 5 L7 3.5 L10 3.5 L11.5 5 L11.5 6.5 L5.5 6.5 Z" fill="#F0F040" stroke="#101010" stroke-width="0.9"/><path d="M8.6 9.6 L15.6 9.6 L17.6 11.6 L17.6 16.6 L8.6 16.6 Z" fill="#fff" stroke="#0A1AA0" stroke-width="1.2"/><path d="M10.5 12.4 H14 M10.5 14.6 H16" stroke="#0A1AA0" stroke-width="1"/></svg>
<div class="t" style="left:537px;top:248.00px;font-size:13px;line-height:13px;color:#000;font-weight:400;">Спин</div>
<div class="t" style="left:601px;top:248.00px;font-size:13px;line-height:13px;color:#000;font-weight:400;">Число</div>
<div class="t" style="left:665px;top:248.00px;font-size:13px;line-height:13px;color:#000;font-weight:400;">Красн</div>
<div class="t" style="left:729px;top:248.00px;font-size:13px;line-height:13px;color:#000;font-weight:400;">чет</div>
<div class="t" style="left:793px;top:248.00px;font-size:13px;line-height:13px;color:#000;font-weight:400;">больш</div>
<div class="t" style="left:857px;top:248.00px;font-size:13px;line-height:13px;color:#000;font-weight:400;">дюжина</div>
<div class="t" style="left:921px;top:248.00px;font-size:13px;line-height:13px;color:#000;font-weight:400;">колонка</div>
<div class="t" style="left:985px;top:248.00px;font-size:13px;line-height:13px;color:#000;font-weight:400;">сиклай</div>
<div class="t" style="left:537px;top:265.00px;font-size:13px;line-height:13px;color:#000;font-weight:400;"></div>
<div class="t" style="left:601px;top:265.00px;font-size:13px;line-height:13px;color:#000;font-weight:400;"></div>
<div class="t" style="left:665px;top:265.00px;font-size:13px;line-height:13px;color:#000;font-weight:400;">Черн</div>
<div class="t" style="left:729px;top:265.00px;font-size:13px;line-height:13px;color:#000;font-weight:400;">нечет</div>
<div class="t" style="left:793px;top:265.00px;font-size:13px;line-height:13px;color:#000;font-weight:400;">менш</div>
<div class="t" style="left:857px;top:265.00px;font-size:13px;line-height:13px;color:#000;font-weight:400;"></div>
<div class="t" style="left:921px;top:265.00px;font-size:13px;line-height:13px;color:#000;font-weight:400;"></div>
<div class="t" style="left:985px;top:265.00px;font-size:13px;line-height:13px;color:#000;font-weight:400;"></div>
<div class="t" style="left:534px;top:282.00px;font-size:13px;line-height:13px;color:#000;font-weight:400;width:62px;text-align:right;">24</div>
<div class="t" style="left:598px;top:282.00px;font-size:13px;line-height:13px;color:#000;font-weight:400;width:62px;text-align:right;">5</div>
<div class="t" style="left:665px;top:282.00px;font-size:13px;line-height:13px;color:#000;font-weight:400;">красн</div>
<div class="t" style="left:729px;top:282.00px;font-size:13px;line-height:13px;color:#000;font-weight:400;">неч</div>
<div class="t" style="left:790px;top:282.00px;font-size:13px;line-height:13px;color:#000;font-weight:400;width:62px;text-align:right;">янв.18</div>
<div class="t" style="left:857px;top:282.00px;font-size:13px;line-height:13px;color:#000;font-weight:400;">1дюжина</div>
<div class="t" style="left:921px;top:282.00px;font-size:13px;line-height:13px;color:#000;font-weight:400;">2колонка</div>
<div class="t" style="left:985px;top:282.00px;font-size:13px;line-height:13px;color:#000;font-weight:400;">1сиклай</div>
<div class="t" style="left:534px;top:299.00px;font-size:13px;line-height:13px;color:#000;font-weight:400;width:62px;text-align:right;">23</div>
<div class="t" style="left:598px;top:299.00px;font-size:13px;line-height:13px;color:#000;font-weight:400;width:62px;text-align:right;">33</div>
<div class="t" style="left:665px;top:299.00px;font-size:13px;line-height:13px;color:#000;font-weight:400;">черн</div>
<div class="t" style="left:729px;top:299.00px;font-size:13px;line-height:13px;color:#000;font-weight:400;">неч</div>
<div class="t" style="left:793px;top:299.00px;font-size:13px;line-height:13px;color:#000;font-weight:400;">19-36</div>
<div class="t" style="left:857px;top:299.00px;font-size:13px;line-height:13px;color:#000;font-weight:400;">3дюжина</div>
<div class="t" style="left:921px;top:299.00px;font-size:13px;line-height:13px;color:#000;font-weight:400;">3колонка</div>
<div class="t" style="left:985px;top:299.00px;font-size:13px;line-height:13px;color:#000;font-weight:400;">6сиклай</div>
<div class="t" style="left:534px;top:316.00px;font-size:13px;line-height:13px;color:#000;font-weight:400;width:62px;text-align:right;">22</div>
<div class="t" style="left:598px;top:316.00px;font-size:13px;line-height:13px;color:#000;font-weight:400;width:62px;text-align:right;">23</div>
<div class="t" style="left:665px;top:316.00px;font-size:13px;line-height:13px;color:#000;font-weight:400;">красн</div>
<div class="t" style="left:729px;top:316.00px;font-size:13px;line-height:13px;color:#000;font-weight:400;">неч</div>
<div class="t" style="left:793px;top:316.00px;font-size:13px;line-height:13px;color:#000;font-weight:400;">19-36</div>
<div class="t" style="left:857px;top:316.00px;font-size:13px;line-height:13px;color:#000;font-weight:400;">2дюжина</div>
<div class="t" style="left:921px;top:316.00px;font-size:13px;line-height:13px;color:#000;font-weight:400;">2колонка</div>
<div class="t" style="left:985px;top:316.00px;font-size:13px;line-height:13px;color:#000;font-weight:400;">4сиклай</div>
<div class="t" style="left:534px;top:333.00px;font-size:13px;line-height:13px;color:#000;font-weight:400;width:62px;text-align:right;">21</div>
<div class="t" style="left:598px;top:333.00px;font-size:13px;line-height:13px;color:#000;font-weight:400;width:62px;text-align:right;">31</div>
<div class="t" style="left:665px;top:333.00px;font-size:13px;line-height:13px;color:#000;font-weight:400;">черн</div>
<div class="t" style="left:729px;top:333.00px;font-size:13px;line-height:13px;color:#000;font-weight:400;">неч</div>
<div class="t" style="left:793px;top:333.00px;font-size:13px;line-height:13px;color:#000;font-weight:400;">19-36</div>
<div class="t" style="left:857px;top:333.00px;font-size:13px;line-height:13px;color:#000;font-weight:400;">3дюжина</div>
<div class="t" style="left:921px;top:333.00px;font-size:13px;line-height:13px;color:#000;font-weight:400;">1колонка</div>
<div class="t" style="left:985px;top:333.00px;font-size:13px;line-height:13px;color:#000;font-weight:400;">6сиклай</div>
<div class="t" style="left:534px;top:350.00px;font-size:13px;line-height:13px;color:#000;font-weight:400;width:62px;text-align:right;">20</div>
<div class="t" style="left:598px;top:350.00px;font-size:13px;line-height:13px;color:#000;font-weight:400;width:62px;text-align:right;">29</div>
<div class="t" style="left:665px;top:350.00px;font-size:13px;line-height:13px;color:#000;font-weight:400;">черн</div>
<div class="t" style="left:729px;top:350.00px;font-size:13px;line-height:13px;color:#000;font-weight:400;">неч</div>
<div class="t" style="left:793px;top:350.00px;font-size:13px;line-height:13px;color:#000;font-weight:400;">19-36</div>
<div class="t" style="left:857px;top:350.00px;font-size:13px;line-height:13px;color:#000;font-weight:400;">3дюжина</div>
<div class="t" style="left:921px;top:350.00px;font-size:13px;line-height:13px;color:#000;font-weight:400;">2колонка</div>
<div class="t" style="left:985px;top:350.00px;font-size:13px;line-height:13px;color:#000;font-weight:400;">5сиклай</div>
<div class="t" style="left:534px;top:367.00px;font-size:13px;line-height:13px;color:#000;font-weight:400;width:62px;text-align:right;">19</div>
<div class="t" style="left:598px;top:367.00px;font-size:13px;line-height:13px;color:#000;font-weight:400;width:62px;text-align:right;">9</div>
<div class="t" style="left:665px;top:367.00px;font-size:13px;line-height:13px;color:#000;font-weight:400;">красн</div>
<div class="t" style="left:729px;top:367.00px;font-size:13px;line-height:13px;color:#000;font-weight:400;">неч</div>
<div class="t" style="left:790px;top:367.00px;font-size:13px;line-height:13px;color:#000;font-weight:400;width:62px;text-align:right;">янв.18</div>
<div class="t" style="left:857px;top:367.00px;font-size:13px;line-height:13px;color:#000;font-weight:400;">1дюжина</div>
<div class="t" style="left:921px;top:367.00px;font-size:13px;line-height:13px;color:#000;font-weight:400;">3колонка</div>
<div class="t" style="left:985px;top:367.00px;font-size:13px;line-height:13px;color:#000;font-weight:400;">2сиклай</div>
<div class="t" style="left:534px;top:384.00px;font-size:13px;line-height:13px;color:#000;font-weight:400;width:62px;text-align:right;">18</div>
<div class="t" style="left:598px;top:384.00px;font-size:13px;line-height:13px;color:#000;font-weight:400;width:62px;text-align:right;">23</div>
<div class="t" style="left:665px;top:384.00px;font-size:13px;line-height:13px;color:#000;font-weight:400;">красн</div>
<div class="t" style="left:729px;top:384.00px;font-size:13px;line-height:13px;color:#000;font-weight:400;">неч</div>
<div class="t" style="left:793px;top:384.00px;font-size:13px;line-height:13px;color:#000;font-weight:400;">19-36</div>
<div class="t" style="left:857px;top:384.00px;font-size:13px;line-height:13px;color:#000;font-weight:400;">2дюжина</div>
<div class="t" style="left:921px;top:384.00px;font-size:13px;line-height:13px;color:#000;font-weight:400;">2колонка</div>
<div class="t" style="left:985px;top:384.00px;font-size:13px;line-height:13px;color:#000;font-weight:400;">4сиклай</div>
<div class="t" style="left:534px;top:401.00px;font-size:13px;line-height:13px;color:#000;font-weight:400;width:62px;text-align:right;">17</div>
<div class="t" style="left:598px;top:401.00px;font-size:13px;line-height:13px;color:#000;font-weight:400;width:62px;text-align:right;">26</div>
<div class="t" style="left:665px;top:401.00px;font-size:13px;line-height:13px;color:#000;font-weight:400;">черн</div>
<div class="t" style="left:729px;top:401.00px;font-size:13px;line-height:13px;color:#000;font-weight:400;">чет</div>
<div class="t" style="left:793px;top:401.00px;font-size:13px;line-height:13px;color:#000;font-weight:400;">19-36</div>
<div class="t" style="left:857px;top:401.00px;font-size:13px;line-height:13px;color:#000;font-weight:400;">3дюжина</div>
<div class="t" style="left:921px;top:401.00px;font-size:13px;line-height:13px;color:#000;font-weight:400;">2колонка</div>
<div class="t" style="left:985px;top:401.00px;font-size:13px;line-height:13px;color:#000;font-weight:400;">5сиклай</div>
<div class="t" style="left:534px;top:418.00px;font-size:13px;line-height:13px;color:#000;font-weight:400;width:62px;text-align:right;">16</div>
<div class="t" style="left:598px;top:418.00px;font-size:13px;line-height:13px;color:#000;font-weight:400;width:62px;text-align:right;">25</div>
<div class="t" style="left:665px;top:418.00px;font-size:13px;line-height:13px;color:#000;font-weight:400;">красн</div>
<div class="t" style="left:729px;top:418.00px;font-size:13px;line-height:13px;color:#000;font-weight:400;">неч</div>
<div class="t" style="left:793px;top:418.00px;font-size:13px;line-height:13px;color:#000;font-weight:400;">19-36</div>
<div class="t" style="left:857px;top:418.00px;font-size:13px;line-height:13px;color:#000;font-weight:400;">3дюжина</div>
<div class="t" style="left:921px;top:418.00px;font-size:13px;line-height:13px;color:#000;font-weight:400;">1колонка</div>
<div class="t" style="left:985px;top:418.00px;font-size:13px;line-height:13px;color:#000;font-weight:400;">5сиклай</div>
<div class="t" style="left:534px;top:435.00px;font-size:13px;line-height:13px;color:#000;font-weight:400;width:62px;text-align:right;">15</div>
<div class="t" style="left:598px;top:435.00px;font-size:13px;line-height:13px;color:#000;font-weight:400;width:62px;text-align:right;">11</div>
<div class="t" style="left:665px;top:435.00px;font-size:13px;line-height:13px;color:#000;font-weight:400;">черн</div>
<div class="t" style="left:729px;top:435.00px;font-size:13px;line-height:13px;color:#000;font-weight:400;">неч</div>
<div class="t" style="left:790px;top:435.00px;font-size:13px;line-height:13px;color:#000;font-weight:400;width:62px;text-align:right;">янв.18</div>
<div class="t" style="left:857px;top:435.00px;font-size:13px;line-height:13px;color:#000;font-weight:400;">1дюжина</div>
<div class="t" style="left:921px;top:435.00px;font-size:13px;line-height:13px;color:#000;font-weight:400;">2колонка</div>
<div class="t" style="left:985px;top:435.00px;font-size:13px;line-height:13px;color:#000;font-weight:400;">2сиклай</div>
<div class="t" style="left:534px;top:452.00px;font-size:13px;line-height:13px;color:#000;font-weight:400;width:62px;text-align:right;">14</div>
<div class="t" style="left:598px;top:452.00px;font-size:13px;line-height:13px;color:#000;font-weight:400;width:62px;text-align:right;">33</div>
<div class="t" style="left:665px;top:452.00px;font-size:13px;line-height:13px;color:#000;font-weight:400;">черн</div>
<div class="t" style="left:729px;top:452.00px;font-size:13px;line-height:13px;color:#000;font-weight:400;">неч</div>
<div class="t" style="left:793px;top:452.00px;font-size:13px;line-height:13px;color:#000;font-weight:400;">19-36</div>
<div class="t" style="left:857px;top:452.00px;font-size:13px;line-height:13px;color:#000;font-weight:400;">3дюжина</div>
<div class="t" style="left:921px;top:452.00px;font-size:13px;line-height:13px;color:#000;font-weight:400;">3колонка</div>
<div class="t" style="left:985px;top:452.00px;font-size:13px;line-height:13px;color:#000;font-weight:400;">6сиклай</div>
<div class="t" style="left:534px;top:469.00px;font-size:13px;line-height:13px;color:#000;font-weight:400;width:62px;text-align:right;">13</div>
<div class="t" style="left:598px;top:469.00px;font-size:13px;line-height:13px;color:#000;font-weight:400;width:62px;text-align:right;">34</div>
<div class="t" style="left:665px;top:469.00px;font-size:13px;line-height:13px;color:#000;font-weight:400;">красн</div>
<div class="t" style="left:729px;top:469.00px;font-size:13px;line-height:13px;color:#000;font-weight:400;">чет</div>
<div class="t" style="left:793px;top:469.00px;font-size:13px;line-height:13px;color:#000;font-weight:400;">19-36</div>
<div class="t" style="left:857px;top:469.00px;font-size:13px;line-height:13px;color:#000;font-weight:400;">3дюжина</div>
<div class="t" style="left:921px;top:469.00px;font-size:13px;line-height:13px;color:#000;font-weight:400;">1колонка</div>
<div class="t" style="left:985px;top:469.00px;font-size:13px;line-height:13px;color:#000;font-weight:400;">6сиклай</div>
<div class="t" style="left:534px;top:486.00px;font-size:13px;line-height:13px;color:#000;font-weight:400;width:62px;text-align:right;">12</div>
<div class="t" style="left:598px;top:486.00px;font-size:13px;line-height:13px;color:#000;font-weight:400;width:62px;text-align:right;">19</div>
<div class="t" style="left:665px;top:486.00px;font-size:13px;line-height:13px;color:#000;font-weight:400;">красн</div>
<div class="t" style="left:729px;top:486.00px;font-size:13px;line-height:13px;color:#000;font-weight:400;">неч</div>
<div class="t" style="left:793px;top:486.00px;font-size:13px;line-height:13px;color:#000;font-weight:400;">19-36</div>
<div class="t" style="left:857px;top:486.00px;font-size:13px;line-height:13px;color:#000;font-weight:400;">2дюжина</div>
<div class="t" style="left:921px;top:486.00px;font-size:13px;line-height:13px;color:#000;font-weight:400;">1колонка</div>
<div class="t" style="left:985px;top:486.00px;font-size:13px;line-height:13px;color:#000;font-weight:400;">4сиклай</div>
<div class="t" style="left:534px;top:503.00px;font-size:13px;line-height:13px;color:#000;font-weight:400;width:62px;text-align:right;">11</div>
<div class="t" style="left:598px;top:503.00px;font-size:13px;line-height:13px;color:#000;font-weight:400;width:62px;text-align:right;">12</div>
<div class="t" style="left:665px;top:503.00px;font-size:13px;line-height:13px;color:#000;font-weight:400;">красн</div>
<div class="t" style="left:729px;top:503.00px;font-size:13px;line-height:13px;color:#000;font-weight:400;">чет</div>
<div class="t" style="left:790px;top:503.00px;font-size:13px;line-height:13px;color:#000;font-weight:400;width:62px;text-align:right;">янв.18</div>
<div class="t" style="left:857px;top:503.00px;font-size:13px;line-height:13px;color:#000;font-weight:400;">1дюжина</div>
<div class="t" style="left:921px;top:503.00px;font-size:13px;line-height:13px;color:#000;font-weight:400;">3колонка</div>
<div class="t" style="left:985px;top:503.00px;font-size:13px;line-height:13px;color:#000;font-weight:400;">2сиклай</div>
<div class="t" style="left:534px;top:520.00px;font-size:13px;line-height:13px;color:#000;font-weight:400;width:62px;text-align:right;">10</div>
<div class="t" style="left:598px;top:520.00px;font-size:13px;line-height:13px;color:#000;font-weight:400;width:62px;text-align:right;">34</div>
<div class="t" style="left:665px;top:520.00px;font-size:13px;line-height:13px;color:#000;font-weight:400;">красн</div>
<div class="t" style="left:729px;top:520.00px;font-size:13px;line-height:13px;color:#000;font-weight:400;">чет</div>
<div class="t" style="left:793px;top:520.00px;font-size:13px;line-height:13px;color:#000;font-weight:400;">19-36</div>
<div class="t" style="left:857px;top:520.00px;font-size:13px;line-height:13px;color:#000;font-weight:400;">3дюжина</div>
<div class="t" style="left:921px;top:520.00px;font-size:13px;line-height:13px;color:#000;font-weight:400;">1колонка</div>
<div class="t" style="left:985px;top:520.00px;font-size:13px;line-height:13px;color:#000;font-weight:400;">6сиклай</div>
<div class="t" style="left:534px;top:537.00px;font-size:13px;line-height:13px;color:#000;font-weight:400;width:62px;text-align:right;">9</div>
<div class="t" style="left:598px;top:537.00px;font-size:13px;line-height:13px;color:#000;font-weight:400;width:62px;text-align:right;">22</div>
<div class="t" style="left:665px;top:537.00px;font-size:13px;line-height:13px;color:#000;font-weight:400;">черн</div>
<div class="t" style="left:729px;top:537.00px;font-size:13px;line-height:13px;color:#000;font-weight:400;">чет</div>
<div class="t" style="left:793px;top:537.00px;font-size:13px;line-height:13px;color:#000;font-weight:400;">19-36</div>
<div class="t" style="left:857px;top:537.00px;font-size:13px;line-height:13px;color:#000;font-weight:400;">2дюжина</div>
<div class="t" style="left:921px;top:537.00px;font-size:13px;line-height:13px;color:#000;font-weight:400;">1колонка</div>
<div class="t" style="left:985px;top:537.00px;font-size:13px;line-height:13px;color:#000;font-weight:400;">4сиклай</div>
<div class="t" style="left:534px;top:554.00px;font-size:13px;line-height:13px;color:#000;font-weight:400;width:62px;text-align:right;">8</div>
<div class="t" style="left:598px;top:554.00px;font-size:13px;line-height:13px;color:#000;font-weight:400;width:62px;text-align:right;">26</div>
<div class="t" style="left:665px;top:554.00px;font-size:13px;line-height:13px;color:#000;font-weight:400;">черн</div>
<div class="t" style="left:729px;top:554.00px;font-size:13px;line-height:13px;color:#000;font-weight:400;">чет</div>
<div class="t" style="left:793px;top:554.00px;font-size:13px;line-height:13px;color:#000;font-weight:400;">19-36</div>
<div class="t" style="left:857px;top:554.00px;font-size:13px;line-height:13px;color:#000;font-weight:400;">3дюжина</div>
<div class="t" style="left:921px;top:554.00px;font-size:13px;line-height:13px;color:#000;font-weight:400;">2колонка</div>
<div class="t" style="left:985px;top:554.00px;font-size:13px;line-height:13px;color:#000;font-weight:400;">5сиклай</div>
<div class="t" style="left:534px;top:571.00px;font-size:13px;line-height:13px;color:#000;font-weight:400;width:62px;text-align:right;">7</div>
<div class="t" style="left:598px;top:571.00px;font-size:13px;line-height:13px;color:#000;font-weight:400;width:62px;text-align:right;">18</div>
<div class="t" style="left:665px;top:571.00px;font-size:13px;line-height:13px;color:#000;font-weight:400;">красн</div>
<div class="t" style="left:729px;top:571.00px;font-size:13px;line-height:13px;color:#000;font-weight:400;">чет</div>
<div class="t" style="left:790px;top:571.00px;font-size:13px;line-height:13px;color:#000;font-weight:400;width:62px;text-align:right;">янв.18</div>
<div class="t" style="left:857px;top:571.00px;font-size:13px;line-height:13px;color:#000;font-weight:400;">2дюжина</div>
<div class="t" style="left:921px;top:571.00px;font-size:13px;line-height:13px;color:#000;font-weight:400;">3колонка</div>
<div class="t" style="left:985px;top:571.00px;font-size:13px;line-height:13px;color:#000;font-weight:400;">3сиклай</div>
<div class="t" style="left:534px;top:588.00px;font-size:13px;line-height:13px;color:#000;font-weight:400;width:62px;text-align:right;">6</div>
<div class="t" style="left:598px;top:588.00px;font-size:13px;line-height:13px;color:#000;font-weight:400;width:62px;text-align:right;">17</div>
<div class="t" style="left:665px;top:588.00px;font-size:13px;line-height:13px;color:#000;font-weight:400;">черн</div>
<div class="t" style="left:729px;top:588.00px;font-size:13px;line-height:13px;color:#000;font-weight:400;">неч</div>
<div class="t" style="left:790px;top:588.00px;font-size:13px;line-height:13px;color:#000;font-weight:400;width:62px;text-align:right;">янв.18</div>
<div class="t" style="left:857px;top:588.00px;font-size:13px;line-height:13px;color:#000;font-weight:400;">2дюжина</div>
<div class="t" style="left:921px;top:588.00px;font-size:13px;line-height:13px;color:#000;font-weight:400;">2колонка</div>
<div class="t" style="left:985px;top:588.00px;font-size:13px;line-height:13px;color:#000;font-weight:400;">3сиклай</div>
<div class="t" style="left:534px;top:605.00px;font-size:13px;line-height:13px;color:#000;font-weight:400;width:62px;text-align:right;">5</div>
<div class="t" style="left:598px;top:605.00px;font-size:13px;line-height:13px;color:#000;font-weight:400;width:62px;text-align:right;">14</div>
<div class="t" style="left:665px;top:605.00px;font-size:13px;line-height:13px;color:#000;font-weight:400;">красн</div>
<div class="t" style="left:729px;top:605.00px;font-size:13px;line-height:13px;color:#000;font-weight:400;">чет</div>
<div class="t" style="left:790px;top:605.00px;font-size:13px;line-height:13px;color:#000;font-weight:400;width:62px;text-align:right;">янв.18</div>
<div class="t" style="left:857px;top:605.00px;font-size:13px;line-height:13px;color:#000;font-weight:400;">2дюжина</div>
<div class="t" style="left:921px;top:605.00px;font-size:13px;line-height:13px;color:#000;font-weight:400;">2колонка</div>
<div class="t" style="left:985px;top:605.00px;font-size:13px;line-height:13px;color:#000;font-weight:400;">3сиклай</div>
<div style="left:1033px;top:176px;width:17px;height:435px;background:#fff;"></div>
<div style="left:1033px;top:178px;width:17px;height:3px;background:#D8D8D0;"></div>
<div style="left:1033px;top:182px;width:17px;height:2px;background:#000;"></div>
<div style="left:1035px;top:185px;width:13px;height:14px;border-radius:2px;background:linear-gradient(to right,#C8D6FA,#B2C6F4);border:1px solid #D8E2F8;box-sizing:border-box;"></div>
<svg style="position:absolute;left:1035px;top:186px" width="14" height="12" viewBox="0 0 14 12"><path d="M3 8 L7 4 L11 8" fill="none" stroke="#4D6185" stroke-width="1.8"/></svg>
<div style="left:1035px;top:202px;width:13px;height:313px;border-radius:2px;background:linear-gradient(to right,#C9D8FC,#B9CDF8 60%,#AFC4F2);border:1px solid #A4B9EA;box-sizing:border-box;"></div>
<div style="left:1038px;top:356px;width:8px;height:1px;background:#EEF4FE;"></div>
<div style="left:1038px;top:358px;width:8px;height:1px;background:#EEF4FE;"></div>
<div style="left:1038px;top:360px;width:8px;height:1px;background:#EEF4FE;"></div>
<div style="left:1038px;top:362px;width:8px;height:1px;background:#EEF4FE;"></div>
<div style="left:1035px;top:597px;width:13px;height:14px;border-radius:2px;background:linear-gradient(to right,#C8D6FA,#B2C6F4);border:1px solid #D8E2F8;box-sizing:border-box;"></div>
<svg style="position:absolute;left:1035px;top:598px" width="14" height="12" viewBox="0 0 14 12"><path d="M3 4 L7 8 L11 4" fill="none" stroke="#4D6185" stroke-width="1.8"/></svg>
<div style="left:508px;top:611px;width:525px;height:17px;background:#ECE9D8;"></div>
<div style="left:508px;top:611px;width:525px;height:1px;background:#808080;"></div>
<svg style="position:absolute;left:508px;top:612px" width="70" height="15" viewBox="0 0 70 15"><path d="M6 4 V11 M13 4 L8 7.5 L13 11 Z" stroke="#000" fill="#000" stroke-width="1"/><path d="M24 4 L19 7.5 L24 11 Z" fill="#000"/><path d="M38 4 L43 7.5 L38 11 Z" fill="#000"/><path d="M53 4 L58 7.5 L53 11 Z M60 4 V11" fill="#000" stroke="#000" stroke-width="1"/></svg>
<div style="left:572px;top:612px;width:1px;height:15px;background:#808080;"></div>
<svg style="position:absolute;left:573px;top:611px" width="110" height="17" viewBox="0 0 110 17"><path d="M1 0 L7 16 L53 16 L59 0 Z" fill="#fff" stroke="#000" stroke-width="0.9"/><path d="M57 6 L53 16 L99 16 L105 0" fill="none" stroke="#000" stroke-width="0.9"/></svg>
<div class="t" style="left:583px;top:614.00px;font-size:13px;line-height:13px;color:#000;font-weight:700;transform:scaleX(0.9485);transform-origin:0 0;">Лист1</div>
<div class="t" style="left:633px;top:614.00px;font-size:13px;line-height:13px;color:#000;font-weight:400;transform:scaleX(0.9300);transform-origin:0 0;">Лист2</div>
<div style="left:508px;top:602px;width:26px;height:17px;background:#FEBE72;"></div>
<div style="left:533px;top:602px;width:2px;height:18px;background:#000080;"></div>
<div style="left:508px;top:619px;width:27px;height:1px;background:#000080;"></div>
<div style="left:508px;top:602px;width:26px;height:1px;background:#000080;"></div>
<div class="t" style="left:508px;top:605.00px;font-size:13px;line-height:13px;color:#000;font-weight:400;width:26px;text-align:center;">25</div>
<div style="left:828px;top:611px;width:205px;height:18px;background:#FBFBF7;"></div>
<div style="left:827px;top:612px;width:2px;height:16px;background:#000;"></div>
<div style="left:830px;top:613px;width:15px;height:15px;border-radius:2px;background:linear-gradient(#C8D6FA,#B2C6F4);border:1px solid #D8E2F8;box-sizing:border-box;"></div>
<svg style="position:absolute;left:830px;top:613px" width="15" height="15" viewBox="0 0 15 15"><path d="M9 4 L5.5 7.5 L9 11" fill="none" stroke="#4D6185" stroke-width="1.8"/></svg>
<div style="left:847px;top:613px;width:126px;height:15px;border-radius:2px;background:linear-gradient(#C9D8FC,#B9CDF8 60%,#AFC4F2);border:1px solid #A4B9EA;box-sizing:border-box;"></div>
<div style="left:906px;top:617px;width:1px;height:7px;background:#EEF4FE;"></div>
<div style="left:908px;top:617px;width:1px;height:7px;background:#EEF4FE;"></div>
<div style="left:910px;top:617px;width:1px;height:7px;background:#EEF4FE;"></div>
<div style="left:912px;top:617px;width:1px;height:7px;background:#EEF4FE;"></div>
<div style="left:1012px;top:613px;width:15px;height:15px;border-radius:2px;background:linear-gradient(#C8D6FA,#B2C6F4);border:1px solid #D8E2F8;box-sizing:border-box;"></div>
<svg style="position:absolute;left:1012px;top:613px" width="15" height="15" viewBox="0 0 15 15"><path d="M6 4 L9.5 7.5 L6 11" fill="none" stroke="#4D6185" stroke-width="1.8"/></svg>
<div style="left:1032px;top:612px;width:2px;height:16px;background:#000;"></div>
<div style="left:1034px;top:612px;width:16px;height:16px;background:#ECE9D8;"></div>
<div style="left:501px;top:634px;width:554px;height:1px;background:#ACA899;"></div>
<div style="left:501px;top:635px;width:554px;height:1px;background:#fff;"></div>
<div style="left:503px;top:659px;width:548px;height:136px;border:1px solid #919B9C;background:linear-gradient(to bottom,#FCFCFE,#F4F3EE);"></div>
<div style="left:505px;top:642px;width:218px;height:16px;border:1px solid #919B9C;border-bottom:none;border-radius:3px 3px 0 0;background:linear-gradient(#FFFFFF,#F3F3EF 60%,#E5E4DC);"></div>
<div class="t" style="left:511.5px;top:645.69px;font-size:11px;line-height:11px;color:#000;font-weight:400;">Частота - Zero, шансы, дюжины, колонки</div>
<div style="left:726px;top:642px;width:156px;height:16px;border:1px solid #919B9C;border-bottom:none;border-radius:3px 3px 0 0;background:linear-gradient(#FFFFFF,#F3F3EF 60%,#E5E4DC);"></div>
<div class="t" style="left:732.5px;top:645.69px;font-size:11px;line-height:11px;color:#000;font-weight:400;">Частота - сиклайны, сектора</div>
<div style="left:885px;top:639px;width:44px;height:21px;border:1px solid #919B9C;border-bottom:none;border-radius:3px 3px 0 0;background:#FCFCFE;"></div>
<div style="left:885px;top:639px;width:46px;height:3px;border-radius:3px 3px 0 0;background:linear-gradient(#E68B2C,#FFC73C);"></div>
<div class="t" style="left:893px;top:642.69px;font-size:11px;line-height:11px;color:#000;font-weight:400;">MD5</div>
<div style="left:508px;top:672px;width:69px;height:69px;border:1px solid #003C74;border-radius:3px;background:linear-gradient(#FFFFFF 0%,#F8F8F5 45%,#F0EFEA 85%,#DEDCD2 100%);"></div>
<div class="t" style="left:508px;top:689.69px;font-size:11px;line-height:11px;color:#000;font-weight:400;width:71px;text-align:center;">Очистка</div>
<div class="t" style="left:508px;top:702.69px;font-size:11px;line-height:11px;color:#000;font-weight:400;width:71px;text-align:center;">Вставка</div>
<div class="t" style="left:508px;top:715.69px;font-size:11px;line-height:11px;color:#000;font-weight:400;width:71px;text-align:center;">Расчет MD5</div>
<div style="left:588px;top:669px;width:77px;height:29px;border:1px solid #003C74;border-radius:3px;background:linear-gradient(#FFFFFF 0%,#F8F8F5 45%,#F0EFEA 85%,#DEDCD2 100%);"></div>
<div class="t" style="left:588px;top:673.69px;font-size:11px;line-height:11px;color:#000;font-weight:400;width:79px;text-align:center;">Очистить и</div>
<div class="t" style="left:588px;top:686.69px;font-size:11px;line-height:11px;color:#000;font-weight:400;width:79px;text-align:center;">вставить</div>
<div style="left:588px;top:712px;width:77px;height:29px;border:1px solid #003C74;border-radius:3px;background:linear-gradient(#FFFFFF 0%,#F8F8F5 45%,#F0EFEA 85%,#DEDCD2 100%);"></div>
<div class="t" style="left:588px;top:722.69px;font-size:11px;line-height:11px;color:#000;font-weight:400;width:79px;text-align:center;">Расчет MD5</div>
<div class="t" style="left:683px;top:664.69px;font-size:11px;line-height:11px;color:#000;font-weight:400;">Исходная строка</div>
<div style="left:683px;top:679px;width:335px;height:19px;border:1px solid #7F9DB9;background:#fff;"></div>
<div class="t" style="left:683px;top:709.69px;font-size:11px;line-height:11px;color:#000;font-weight:400;">Выходная строка MD5</div>
<div style="left:683px;top:724px;width:335px;height:19px;border:1px solid #7F9DB9;background:#fff;"></div>
<div style="left:501px;top:799px;width:556px;height:1px;background:#ACA899;"></div>
<div style="left:4px;top:800px;width:1053px;height:30px;background:linear-gradient(#ECE9D8,#ECE9D8 60%,#F2F0E6);"></div>
<div style="left:4px;top:799px;width:1053px;height:3px;background:linear-gradient(#B4B0A0,#A8A494 50%,#CFCBBC);"></div>
<div class="t" style="left:5px;top:811.69px;font-size:11px;line-height:11px;color:#000;font-weight:400;">В последнем спине выпало: 5 красное</div>
<svg style="position:absolute;left:1040px;top:816px" width="16" height="14" viewBox="0 0 16 14"><g fill="#B0AC9C"><rect x="12" y="2" width="2" height="2"/><rect x="8" y="6" width="2" height="2"/><rect x="12" y="6" width="2" height="2"/><rect x="4" y="10" width="2" height="2"/><rect x="8" y="10" width="2" height="2"/><rect x="12" y="10" width="2" height="2"/></g></svg>
</body></html>
